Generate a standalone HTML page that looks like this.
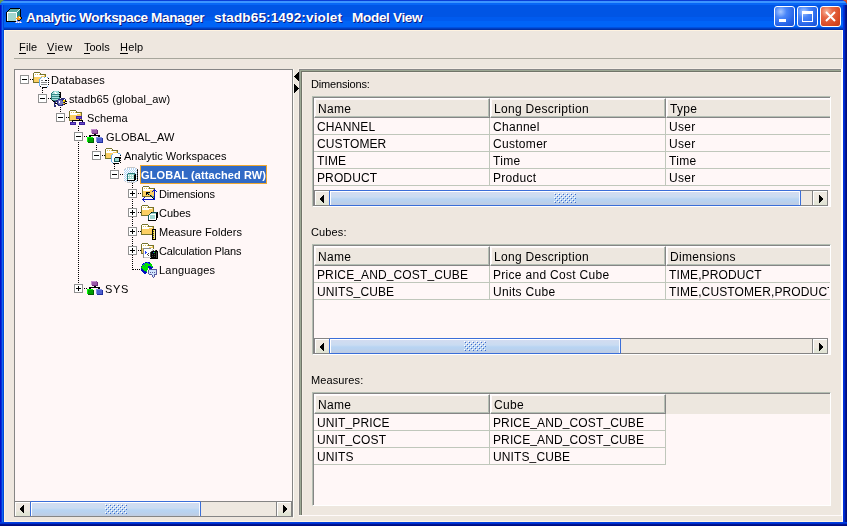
<!DOCTYPE html>
<html><head><meta charset="utf-8">
<style>
*{margin:0;padding:0;box-sizing:border-box}
html,body{width:847px;height:526px;overflow:hidden;background:linear-gradient(to right,#6a9a48 0,#6a9a48 423px,#d04a20 423px);font-family:"Liberation Sans",sans-serif}
.a{position:absolute}
#win{position:absolute;left:0;top:0;width:847px;height:526px;border-radius:6px 6px 0 0;overflow:hidden;background:#0842d8}
#title{position:absolute;left:0;top:0;width:847px;height:30px;
background:linear-gradient(to bottom,#0a3ed6 0px,#0a3ed6 1px,#3d95ff 1px,#3d95ff 3px,#0766f6 3px,#0766f6 5px,#0055e5 5px,#0055e5 17px,#005bef 17px,#005bef 21px,#0064f7 21px,#0064f7 27px,#0050e0 27px,#0050e0 28px,#0040c0 28px,#0040c0 29px,#0030a8 29px,#0030a8 30px)}
#lb{position:absolute;left:0;top:5px;width:4px;height:521px;background:linear-gradient(to right,#0010c8 0,#0010c8 1px,#0830d8 1px,#0830d8 2px,#1068f0 2px,#1068f0 3px,#0048d8 3px)}
#rb{position:absolute;left:843px;top:5px;width:4px;height:521px;background:linear-gradient(to right,#0030e0 0,#0030e0 1px,#0028c8 1px,#0028c8 2px,#001890 2px,#001890 3px,#000c80 3px)}
#bb{position:absolute;left:0;top:522px;width:847px;height:4px;background:linear-gradient(to bottom,#0040e0 0,#0040e0 1px,#0030d0 1px,#0030d0 2px,#001490 2px,#001490 3px,#000c80 3px)}
#client{position:absolute;left:4px;top:30px;width:839px;height:492px;background:#eee7df;border-top:1px solid #fff3e0;border-left:1px solid #fff3e0;border-bottom:1px solid #fff3e0;border-right:1px solid #fffff8}
.tt{position:absolute;top:9px;color:#fff;font-weight:bold;font-size:13.6px;line-height:17px;white-space:pre;text-shadow:1px 1px #0a1883}
.wbtn{position:absolute;top:6px;width:21px;height:21px;border:1px solid #fff;border-radius:3px;
background:radial-gradient(circle at 30% 25%,#a8c8ff 0,#4a86f8 30%,#2463e8 70%,#1a4fd0 100%)}
.wclose{background:radial-gradient(circle at 30% 25%,#f8b8a0 0,#e86a48 30%,#d84a24 70%,#c03a18 100%)}
.menu{position:absolute;top:41px;font-size:11px;line-height:13px;color:#000}
.menu u{text-decoration:none;border-bottom:1px solid #000}
.tree{position:absolute;left:14px;top:69px;width:279px;height:448px;border:1px solid #858585;background:#fff7f7}
.ti{position:absolute;font-size:11px;line-height:13px;color:#000;white-space:nowrap;letter-spacing:-0.15px}
.exp{position:absolute;width:9px;height:9px;border:1px solid #919191;background:#fff}
.exp:before{content:"";position:absolute;left:1px;top:3px;width:5px;height:1px;background:#000}
.exp.plus:after{content:"";position:absolute;left:3px;top:1px;width:1px;height:5px;background:#000}
.vd{position:absolute;width:1px;background:repeating-linear-gradient(to bottom,#000 0,#000 1px,transparent 1px,transparent 2px)}
.hd{position:absolute;height:1px;background:repeating-linear-gradient(to right,#000 0,#000 1px,transparent 1px,transparent 2px)}
.ico{position:absolute;width:16px;height:16px}
.lbl{position:absolute;font-size:11px;line-height:13px;color:#000;letter-spacing:-0.35px}
.pane{position:absolute;left:312px;width:519px;border-top:2px solid #898d86;border-left:2px solid #898d86;border-right:1px solid #fff;border-bottom:1px solid #fff;background:#fff8f8;overflow:hidden}
.hdr{position:absolute;left:0;top:0;height:20px;background:#ece9d8;border-top:0px solid #fff;box-shadow:inset 1px 2px #fff, inset -1px -2px #8b9087}
.cell{position:absolute;font-size:12px;line-height:15px;height:16px;color:#000;white-space:nowrap;overflow:hidden;letter-spacing:0px}
.grid{position:absolute;background:#c0c7bb}
.sb{position:absolute;height:16px;background:#efebe0}
.sbtn{position:absolute;top:0;width:15px;height:16px;background:linear-gradient(to bottom,#f4f1e8 0,#ebe7da 60%,#dcdccc 100%);border:1px solid #a0a098}
.thumb{position:absolute;top:0;height:16px;border:1px solid #3a6bd0;border-radius:1px;background:linear-gradient(to bottom,#d2def2 0,#c8dcf2 40%,#b8d4f0 55%,#bccbe0 100%)}
.grip{position:absolute;top:4px;width:22px;height:9px;background-image:radial-gradient(circle,#3a6bd0 0.7px,transparent 0.8px);background-size:4px 4px}
.ti,.cell,.lbl,.menu{filter:grayscale(1)}
#rightc,#win{}
</style></head><body>
<div id="win">
<div id="title">
  <svg class="a" style="left:6px;top:8px" width="17" height="16" viewBox="0 0 17 16" shape-rendering="crispEdges"><rect x="4" y="0" width="10" height="1" fill="#000000"/><rect x="3" y="1" width="1" height="1" fill="#000000"/><rect x="4" y="1" width="9" height="1" fill="#5aaaa2"/><rect x="13" y="1" width="1" height="1" fill="#e0f4f0"/><rect x="14" y="1" width="1" height="1" fill="#000000"/><rect x="2" y="2" width="1" height="1" fill="#000000"/><rect x="3" y="2" width="9" height="1" fill="#5aaaa2"/><rect x="12" y="2" width="1" height="1" fill="#e0f4f0"/><rect x="13" y="2" width="1" height="1" fill="#2a8a86"/><rect x="14" y="2" width="1" height="1" fill="#000000"/><rect x="1" y="3" width="1" height="1" fill="#000000"/><rect x="2" y="3" width="9" height="1" fill="#5aaaa2"/><rect x="11" y="3" width="1" height="1" fill="#e0f4f0"/><rect x="12" y="3" width="2" height="1" fill="#2a8a86"/><rect x="14" y="3" width="1" height="1" fill="#000000"/><rect x="0" y="4" width="1" height="1" fill="#000000"/><rect x="1" y="4" width="9" height="1" fill="#ffffff"/><rect x="10" y="4" width="1" height="1" fill="#e0f4f0"/><rect x="11" y="4" width="3" height="1" fill="#2a8a86"/><rect x="14" y="4" width="1" height="1" fill="#000000"/><rect x="0" y="5" width="1" height="1" fill="#000000"/><rect x="1" y="5" width="1" height="1" fill="#ffffff"/><rect x="2" y="5" width="8" height="1" fill="#a2d6ce"/><rect x="10" y="5" width="1" height="1" fill="#ffffff"/><rect x="11" y="5" width="3" height="1" fill="#2a8a86"/><rect x="14" y="5" width="1" height="1" fill="#000000"/><rect x="0" y="6" width="1" height="1" fill="#000000"/><rect x="1" y="6" width="1" height="1" fill="#ffffff"/><rect x="2" y="6" width="8" height="1" fill="#a2d6ce"/><rect x="10" y="6" width="1" height="1" fill="#ffffff"/><rect x="11" y="6" width="3" height="1" fill="#2a8a86"/><rect x="14" y="6" width="1" height="1" fill="#000000"/><rect x="0" y="7" width="1" height="1" fill="#000000"/><rect x="1" y="7" width="1" height="1" fill="#ffffff"/><rect x="2" y="7" width="8" height="1" fill="#a2d6ce"/><rect x="10" y="7" width="1" height="1" fill="#ffffff"/><rect x="11" y="7" width="3" height="1" fill="#2a8a86"/><rect x="14" y="7" width="1" height="1" fill="#000000"/><rect x="0" y="8" width="1" height="1" fill="#000000"/><rect x="1" y="8" width="1" height="1" fill="#ffffff"/><rect x="2" y="8" width="8" height="1" fill="#a2d6ce"/><rect x="10" y="8" width="1" height="1" fill="#ffffff"/><rect x="11" y="8" width="1" height="1" fill="#2a8a86"/><rect x="12" y="8" width="2" height="1" fill="#f0a020"/><rect x="14" y="8" width="1" height="1" fill="#000000"/><rect x="0" y="9" width="1" height="1" fill="#000000"/><rect x="1" y="9" width="1" height="1" fill="#ffffff"/><rect x="2" y="9" width="8" height="1" fill="#a2d6ce"/><rect x="10" y="9" width="1" height="1" fill="#ffffff"/><rect x="11" y="9" width="2" height="1" fill="#f0a020"/><rect x="13" y="9" width="1" height="1" fill="#ffffff"/><rect x="14" y="9" width="1" height="1" fill="#f0a020"/><rect x="15" y="9" width="1" height="1" fill="#000000"/><rect x="0" y="10" width="1" height="1" fill="#000000"/><rect x="1" y="10" width="1" height="1" fill="#ffffff"/><rect x="2" y="10" width="8" height="1" fill="#a2d6ce"/><rect x="10" y="10" width="5" height="1" fill="#f0a020"/><rect x="15" y="10" width="1" height="1" fill="#000000"/><rect x="0" y="11" width="1" height="1" fill="#000000"/><rect x="1" y="11" width="1" height="1" fill="#ffffff"/><rect x="2" y="11" width="8" height="1" fill="#a2d6ce"/><rect x="10" y="11" width="1" height="1" fill="#ffffff"/><rect x="11" y="11" width="1" height="1" fill="#c07010"/><rect x="12" y="11" width="2" height="1" fill="#f0a020"/><rect x="14" y="11" width="1" height="1" fill="#000000"/><rect x="0" y="12" width="1" height="1" fill="#000000"/><rect x="1" y="12" width="1" height="1" fill="#ffffff"/><rect x="2" y="12" width="8" height="1" fill="#a2d6ce"/><rect x="10" y="12" width="1" height="1" fill="#ffffff"/><rect x="12" y="12" width="2" height="1" fill="#000000"/><rect x="0" y="13" width="10" height="1" fill="#000000"/><rect x="10" y="13" width="5" height="1" fill="#a8a8e8"/><rect x="9" y="14" width="1" height="1" fill="#a8a8e8"/><rect x="10" y="14" width="1" height="1" fill="#ffffff"/><rect x="11" y="14" width="1" height="1" fill="#a8a8e8"/><rect x="12" y="14" width="1" height="1" fill="#ffffff"/><rect x="13" y="14" width="1" height="1" fill="#a8a8e8"/><rect x="14" y="14" width="1" height="1" fill="#ffffff"/><rect x="15" y="14" width="1" height="1" fill="#a8a8e8"/></svg>
  <div class="tt" style="left:26px;letter-spacing:-0.4px">Analytic Workspace Manager</div>
  <div class="tt" style="left:214px;letter-spacing:0.1px">stadb65:1492:violet</div>
  <div class="tt" style="left:352px;letter-spacing:-0.35px">Model View</div>
  <div class="wbtn" style="left:774px"><div class="a" style="left:4px;top:12px;width:7px;height:3px;background:#fff"></div></div>
  <div class="wbtn" style="left:797px"><div class="a" style="left:4px;top:4px;width:11px;height:11px;border:1px solid #fff;border-top-width:3px"></div></div>
  <div class="wbtn wclose" style="left:820px">
    <svg class="a" style="left:4px;top:4px" width="11" height="11" viewBox="0 0 11 11"><path d="M1 1 L10 10 M10 1 L1 10" stroke="#fff" stroke-width="2"/></svg>
  </div>
</div>
<div id="lb"></div><div id="rb"></div><div id="bb"></div>
<div id="client"></div>

<!-- menu -->
<div class="menu" style="left:19px;letter-spacing:0.17px"><u>F</u>ile</div>
<div class="menu" style="left:47px;letter-spacing:0.5px"><u>V</u>iew</div>
<div class="menu" style="left:84px"><u>T</u>ools</div>
<div class="menu" style="left:120px;letter-spacing:0.2px"><u>H</u>elp</div>
<div class="a" style="left:14px;top:58px;width:829px;height:1px;background:#a7a69c"></div>

<!-- tree pane -->
<div class="tree"></div>
<div class="hd" style="left:133px;top:269px;width:8px"></div>
<div class="vd" style="left:132px;top:183px;height:87px"></div>
<div class="vd" style="left:114px;top:164px;height:6px"></div>
<div class="vd" style="left:96px;top:145px;height:6px"></div>
<div class="vd" style="left:78px;top:126px;height:158px"></div>
<div class="vd" style="left:60px;top:107px;height:6px"></div>
<div class="vd" style="left:42px;top:88px;height:6px"></div>
<div class="exp" style="left:20px;top:75px"></div>
<div class="hd" style="left:30px;top:79px;width:3px"></div>
<svg class="ico" style="left:33px;top:72px;width:18px;height:18px" viewBox="0 0 18 18" shape-rendering="crispEdges"><rect x="1" y="0" width="6" height="1" fill="#77732c"/><rect x="0" y="1" width="1" height="1" fill="#77732c"/><rect x="1" y="1" width="6" height="1" fill="#ffffff"/><rect x="7" y="1" width="1" height="1" fill="#77732c"/><rect x="0" y="2" width="1" height="1" fill="#77732c"/><rect x="1" y="2" width="1" height="1" fill="#ffffff"/><rect x="2" y="2" width="1" height="1" fill="#e8c858"/><rect x="3" y="2" width="1" height="1" fill="#ffffff"/><rect x="4" y="2" width="1" height="1" fill="#e8c858"/><rect x="5" y="2" width="1" height="1" fill="#ffffff"/><rect x="6" y="2" width="1" height="1" fill="#e8c858"/><rect x="7" y="2" width="6" height="1" fill="#77732c"/><rect x="0" y="3" width="1" height="1" fill="#77732c"/><rect x="1" y="3" width="10" height="1" fill="#ffffff"/><rect x="11" y="3" width="1" height="1" fill="#fccf62"/><rect x="12" y="3" width="1" height="1" fill="#77732c"/><rect x="0" y="4" width="1" height="1" fill="#77732c"/><rect x="1" y="4" width="7" height="1" fill="#ffffff"/><rect x="8" y="4" width="4" height="1" fill="#fccf62"/><rect x="12" y="4" width="1" height="1" fill="#77732c"/><rect x="0" y="5" width="1" height="1" fill="#77732c"/><rect x="1" y="5" width="11" height="1" fill="#fccf62"/><rect x="12" y="5" width="1" height="1" fill="#77732c"/><rect x="0" y="6" width="1" height="1" fill="#77732c"/><rect x="1" y="6" width="11" height="1" fill="#fccf62"/><rect x="12" y="6" width="1" height="1" fill="#77732c"/><rect x="0" y="7" width="1" height="1" fill="#77732c"/><rect x="1" y="7" width="11" height="1" fill="#fccf62"/><rect x="12" y="7" width="1" height="1" fill="#77732c"/><rect x="0" y="8" width="1" height="1" fill="#77732c"/><rect x="1" y="8" width="11" height="1" fill="#fccf62"/><rect x="12" y="8" width="1" height="1" fill="#77732c"/><rect x="0" y="9" width="1" height="1" fill="#77732c"/><rect x="1" y="9" width="11" height="1" fill="#fccf62"/><rect x="12" y="9" width="1" height="1" fill="#77732c"/><rect x="0" y="10" width="13" height="1" fill="#77732c"/><rect x="8" y="5" width="1" height="1" fill="#6ab0f0"/><rect x="9" y="5" width="2" height="1" fill="#ffffff"/><rect x="11" y="5" width="1" height="1" fill="#6ab0f0"/><rect x="12" y="5" width="2" height="1" fill="#ffffff"/><rect x="14" y="5" width="1" height="1" fill="#6ab0f0"/><rect x="7" y="6" width="1" height="1" fill="#6ab0f0"/><rect x="8" y="6" width="7" height="1" fill="#ffffff"/><rect x="15" y="6" width="1" height="1" fill="#000000"/><rect x="6" y="7" width="1" height="1" fill="#6ab0f0"/><rect x="7" y="7" width="8" height="1" fill="#ffffff"/><rect x="6" y="8" width="1" height="1" fill="#6ab0f0"/><rect x="7" y="8" width="1" height="1" fill="#ffffff"/><rect x="8" y="8" width="2" height="1" fill="#8a8a8a"/><rect x="10" y="8" width="2" height="1" fill="#ffffff"/><rect x="12" y="8" width="2" height="1" fill="#000000"/><rect x="14" y="8" width="1" height="1" fill="#ffffff"/><rect x="15" y="8" width="1" height="1" fill="#000000"/><rect x="6" y="9" width="1" height="1" fill="#6ab0f0"/><rect x="7" y="9" width="8" height="1" fill="#ffffff"/><rect x="6" y="10" width="1" height="1" fill="#6ab0f0"/><rect x="7" y="10" width="1" height="1" fill="#ffffff"/><rect x="8" y="10" width="6" height="1" fill="#8a8a8a"/><rect x="14" y="10" width="1" height="1" fill="#ffffff"/><rect x="15" y="10" width="1" height="1" fill="#000000"/><rect x="6" y="11" width="1" height="1" fill="#6ab0f0"/><rect x="7" y="11" width="8" height="1" fill="#ffffff"/><rect x="6" y="12" width="1" height="1" fill="#6ab0f0"/><rect x="7" y="12" width="1" height="1" fill="#ffffff"/><rect x="8" y="12" width="6" height="1" fill="#8a8a8a"/><rect x="14" y="12" width="1" height="1" fill="#ffffff"/><rect x="15" y="12" width="1" height="1" fill="#000000"/><rect x="6" y="13" width="1" height="1" fill="#6ab0f0"/><rect x="7" y="13" width="8" height="1" fill="#ffffff"/><rect x="7" y="14" width="1" height="1" fill="#000000"/><rect x="8" y="14" width="6" height="1" fill="#ffffff"/><rect x="14" y="14" width="1" height="1" fill="#6ab0f0"/><rect x="9" y="15" width="5" height="1" fill="#000000"/></svg>
<div class="ti" style="left:51px;top:74px;letter-spacing:0.14px">Databases</div>
<div class="exp" style="left:38px;top:94px"></div>
<div class="hd" style="left:48px;top:98px;width:3px"></div>
<svg class="ico" style="left:51px;top:91px;width:18px;height:18px" viewBox="0 0 18 18" shape-rendering="crispEdges"><rect x="2" y="0" width="1" height="1" fill="#5aaaa8"/><rect x="3" y="0" width="4" height="1" fill="#a8e0dc"/><rect x="7" y="0" width="1" height="1" fill="#5aaaa8"/><rect x="1" y="1" width="1" height="1" fill="#2a7a78"/><rect x="2" y="1" width="1" height="1" fill="#a8e0dc"/><rect x="3" y="1" width="1" height="1" fill="#d8f4f0"/><rect x="4" y="1" width="1" height="1" fill="#ffffff"/><rect x="5" y="1" width="3" height="1" fill="#a8e0dc"/><rect x="8" y="1" width="2" height="1" fill="#000000"/><rect x="0" y="2" width="1" height="1" fill="#2a7a78"/><rect x="1" y="2" width="3" height="1" fill="#a8e0dc"/><rect x="4" y="2" width="2" height="1" fill="#ffffff"/><rect x="6" y="2" width="3" height="1" fill="#a8e0dc"/><rect x="9" y="2" width="1" height="1" fill="#000000"/><rect x="0" y="3" width="1" height="1" fill="#2a7a78"/><rect x="1" y="3" width="7" height="1" fill="#3a8a88"/><rect x="8" y="3" width="2" height="1" fill="#000000"/><rect x="0" y="4" width="1" height="1" fill="#2a7a78"/><rect x="1" y="4" width="7" height="1" fill="#a8e0dc"/><rect x="8" y="4" width="1" height="1" fill="#2a7a78"/><rect x="9" y="4" width="1" height="1" fill="#000000"/><rect x="0" y="5" width="1" height="1" fill="#2a7a78"/><rect x="1" y="5" width="7" height="1" fill="#3a8a88"/><rect x="8" y="5" width="2" height="1" fill="#000000"/><rect x="0" y="6" width="1" height="1" fill="#2a7a78"/><rect x="1" y="6" width="7" height="1" fill="#a8e0dc"/><rect x="8" y="6" width="1" height="1" fill="#2a7a78"/><rect x="9" y="6" width="1" height="1" fill="#000000"/><rect x="0" y="7" width="1" height="1" fill="#2a7a78"/><rect x="1" y="7" width="7" height="1" fill="#3a8a88"/><rect x="8" y="7" width="1" height="1" fill="#2a7a78"/><rect x="10" y="7" width="4" height="1" fill="#2c2c78"/><rect x="0" y="8" width="1" height="1" fill="#2a7a78"/><rect x="1" y="8" width="6" height="1" fill="#a8e0dc"/><rect x="7" y="8" width="6" height="1" fill="#2c2c78"/><rect x="13" y="8" width="1" height="1" fill="#ffffff"/><rect x="14" y="8" width="1" height="1" fill="#2c2c78"/><rect x="1" y="9" width="1" height="1" fill="#000000"/><rect x="2" y="9" width="1" height="1" fill="#2a7a78"/><rect x="3" y="9" width="2" height="1" fill="#3a8a88"/><rect x="5" y="9" width="2" height="1" fill="#2c2c78"/><rect x="7" y="9" width="4" height="1" fill="#7878c0"/><rect x="11" y="9" width="1" height="1" fill="#2c2c78"/><rect x="12" y="9" width="2" height="1" fill="#f8e800"/><rect x="14" y="9" width="1" height="1" fill="#000000"/><rect x="2" y="10" width="2" height="1" fill="#000000"/><rect x="4" y="10" width="3" height="1" fill="#2c2c78"/><rect x="7" y="10" width="1" height="1" fill="#7878c0"/><rect x="8" y="10" width="1" height="1" fill="#ffffff"/><rect x="9" y="10" width="3" height="1" fill="#7878c0"/><rect x="12" y="10" width="1" height="1" fill="#f8e800"/><rect x="13" y="10" width="1" height="1" fill="#f09020"/><rect x="14" y="10" width="2" height="1" fill="#000000"/><rect x="3" y="11" width="2" height="1" fill="#2c2c78"/><rect x="5" y="11" width="1" height="1" fill="#ffffff"/><rect x="6" y="11" width="1" height="1" fill="#2c2c78"/><rect x="7" y="11" width="1" height="1" fill="#7878c0"/><rect x="8" y="11" width="1" height="1" fill="#ffffff"/><rect x="9" y="11" width="3" height="1" fill="#7878c0"/><rect x="12" y="11" width="1" height="1" fill="#2c2c78"/><rect x="13" y="11" width="1" height="1" fill="#000000"/><rect x="3" y="12" width="1" height="1" fill="#2c2c78"/><rect x="4" y="12" width="2" height="1" fill="#000000"/><rect x="6" y="12" width="1" height="1" fill="#2c2c78"/><rect x="7" y="12" width="5" height="1" fill="#7878c0"/><rect x="12" y="12" width="1" height="1" fill="#f8e800"/><rect x="13" y="12" width="1" height="1" fill="#f09020"/><rect x="14" y="12" width="2" height="1" fill="#000000"/><rect x="3" y="13" width="1" height="1" fill="#2c2c78"/><rect x="6" y="13" width="2" height="1" fill="#2c2c78"/><rect x="8" y="13" width="3" height="1" fill="#7878c0"/><rect x="11" y="13" width="2" height="1" fill="#2c2c78"/><rect x="13" y="13" width="1" height="1" fill="#000000"/><rect x="3" y="14" width="2" height="1" fill="#2c2c78"/><rect x="7" y="14" width="5" height="1" fill="#2c2c78"/><rect x="3" y="15" width="2" height="1" fill="#2c2c78"/></svg>
<div class="ti" style="left:69px;top:93px;letter-spacing:0.12px">stadb65 (global_aw)</div>
<div class="exp" style="left:56px;top:113px"></div>
<div class="hd" style="left:66px;top:117px;width:3px"></div>
<svg class="ico" style="left:69px;top:110px;width:18px;height:18px" viewBox="0 0 18 18" shape-rendering="crispEdges"><rect x="1" y="0" width="6" height="1" fill="#77732c"/><rect x="0" y="1" width="1" height="1" fill="#77732c"/><rect x="1" y="1" width="6" height="1" fill="#ffffff"/><rect x="7" y="1" width="1" height="1" fill="#77732c"/><rect x="0" y="2" width="1" height="1" fill="#77732c"/><rect x="1" y="2" width="1" height="1" fill="#ffffff"/><rect x="2" y="2" width="1" height="1" fill="#e8c858"/><rect x="3" y="2" width="1" height="1" fill="#ffffff"/><rect x="4" y="2" width="1" height="1" fill="#e8c858"/><rect x="5" y="2" width="1" height="1" fill="#ffffff"/><rect x="6" y="2" width="1" height="1" fill="#e8c858"/><rect x="7" y="2" width="6" height="1" fill="#77732c"/><rect x="0" y="3" width="1" height="1" fill="#77732c"/><rect x="1" y="3" width="10" height="1" fill="#ffffff"/><rect x="11" y="3" width="1" height="1" fill="#fccf62"/><rect x="12" y="3" width="1" height="1" fill="#77732c"/><rect x="0" y="4" width="1" height="1" fill="#77732c"/><rect x="1" y="4" width="7" height="1" fill="#ffffff"/><rect x="8" y="4" width="4" height="1" fill="#fccf62"/><rect x="12" y="4" width="1" height="1" fill="#77732c"/><rect x="0" y="5" width="1" height="1" fill="#77732c"/><rect x="1" y="5" width="11" height="1" fill="#fccf62"/><rect x="12" y="5" width="1" height="1" fill="#77732c"/><rect x="0" y="6" width="1" height="1" fill="#77732c"/><rect x="1" y="6" width="11" height="1" fill="#fccf62"/><rect x="12" y="6" width="1" height="1" fill="#77732c"/><rect x="0" y="7" width="1" height="1" fill="#77732c"/><rect x="1" y="7" width="11" height="1" fill="#fccf62"/><rect x="12" y="7" width="1" height="1" fill="#77732c"/><rect x="0" y="8" width="1" height="1" fill="#77732c"/><rect x="1" y="8" width="11" height="1" fill="#fccf62"/><rect x="12" y="8" width="1" height="1" fill="#77732c"/><rect x="0" y="9" width="1" height="1" fill="#77732c"/><rect x="1" y="9" width="11" height="1" fill="#fccf62"/><rect x="12" y="9" width="1" height="1" fill="#77732c"/><rect x="0" y="10" width="13" height="1" fill="#77732c"/><rect x="7" y="6" width="6" height="1" fill="#4020a0"/><rect x="7" y="7" width="1" height="1" fill="#4020a0"/><rect x="8" y="7" width="4" height="1" fill="#6a50c8"/><rect x="12" y="7" width="1" height="1" fill="#4020a0"/><rect x="7" y="8" width="6" height="1" fill="#4020a0"/><rect x="10" y="9" width="1" height="1" fill="#000000"/><rect x="3" y="10" width="11" height="1" fill="#000000"/><rect x="3" y="11" width="1" height="1" fill="#000000"/><rect x="13" y="11" width="1" height="1" fill="#000000"/><rect x="1" y="12" width="6" height="1" fill="#4020a0"/><rect x="10" y="12" width="6" height="1" fill="#4020a0"/><rect x="1" y="13" width="1" height="1" fill="#4020a0"/><rect x="2" y="13" width="4" height="1" fill="#6a50c8"/><rect x="6" y="13" width="1" height="1" fill="#4020a0"/><rect x="10" y="13" width="1" height="1" fill="#4020a0"/><rect x="11" y="13" width="4" height="1" fill="#6a50c8"/><rect x="15" y="13" width="1" height="1" fill="#4020a0"/><rect x="1" y="14" width="6" height="1" fill="#4020a0"/><rect x="10" y="14" width="6" height="1" fill="#4020a0"/></svg>
<div class="ti" style="left:87px;top:112px;letter-spacing:0.06px">Schema</div>
<div class="exp" style="left:74px;top:132px"></div>
<div class="hd" style="left:84px;top:136px;width:3px"></div>
<svg class="ico" style="left:87px;top:129px;width:18px;height:18px" viewBox="0 0 18 18" shape-rendering="crispEdges"><rect x="4" y="0" width="5" height="1" fill="#c890d0"/><rect x="9" y="0" width="1" height="1" fill="#9a5aa8"/><rect x="4" y="1" width="1" height="1" fill="#c890d0"/><rect x="5" y="1" width="5" height="1" fill="#9a5aa8"/><rect x="10" y="1" width="1" height="1" fill="#6a2a78"/><rect x="4" y="2" width="1" height="1" fill="#c890d0"/><rect x="5" y="2" width="5" height="1" fill="#9a5aa8"/><rect x="10" y="2" width="1" height="1" fill="#6a2a78"/><rect x="4" y="3" width="1" height="1" fill="#c890d0"/><rect x="5" y="3" width="5" height="1" fill="#9a5aa8"/><rect x="10" y="3" width="1" height="1" fill="#6a2a78"/><rect x="5" y="4" width="6" height="1" fill="#6a2a78"/><rect x="7" y="5" width="2" height="1" fill="#000000"/><rect x="2" y="6" width="11" height="1" fill="#000000"/><rect x="2" y="7" width="2" height="1" fill="#000000"/><rect x="11" y="7" width="2" height="1" fill="#000000"/><rect x="0" y="8" width="6" height="1" fill="#00ff00"/><rect x="9" y="8" width="6" height="1" fill="#8090e8"/><rect x="0" y="9" width="1" height="1" fill="#00ff00"/><rect x="1" y="9" width="5" height="1" fill="#00a000"/><rect x="6" y="9" width="1" height="1" fill="#006000"/><rect x="9" y="9" width="1" height="1" fill="#8090e8"/><rect x="10" y="9" width="5" height="1" fill="#5060d0"/><rect x="15" y="9" width="1" height="1" fill="#2030a0"/><rect x="0" y="10" width="1" height="1" fill="#00ff00"/><rect x="1" y="10" width="5" height="1" fill="#00a000"/><rect x="6" y="10" width="1" height="1" fill="#006000"/><rect x="9" y="10" width="1" height="1" fill="#8090e8"/><rect x="10" y="10" width="5" height="1" fill="#5060d0"/><rect x="15" y="10" width="1" height="1" fill="#2030a0"/><rect x="0" y="11" width="1" height="1" fill="#00ff00"/><rect x="1" y="11" width="5" height="1" fill="#00a000"/><rect x="6" y="11" width="1" height="1" fill="#006000"/><rect x="9" y="11" width="1" height="1" fill="#8090e8"/><rect x="10" y="11" width="5" height="1" fill="#5060d0"/><rect x="15" y="11" width="1" height="1" fill="#2030a0"/><rect x="0" y="12" width="1" height="1" fill="#00ff00"/><rect x="1" y="12" width="5" height="1" fill="#00a000"/><rect x="6" y="12" width="1" height="1" fill="#006000"/><rect x="9" y="12" width="1" height="1" fill="#8090e8"/><rect x="10" y="12" width="5" height="1" fill="#5060d0"/><rect x="15" y="12" width="1" height="1" fill="#2030a0"/><rect x="1" y="13" width="6" height="1" fill="#006000"/><rect x="10" y="13" width="6" height="1" fill="#2030a0"/></svg>
<div class="ti" style="left:106px;top:131px;letter-spacing:0.11px">GLOBAL_AW</div>
<div class="exp" style="left:92px;top:151px"></div>
<div class="hd" style="left:102px;top:155px;width:3px"></div>
<svg class="ico" style="left:105px;top:148px;width:18px;height:18px" viewBox="0 0 18 18" shape-rendering="crispEdges"><rect x="1" y="0" width="6" height="1" fill="#77732c"/><rect x="0" y="1" width="1" height="1" fill="#77732c"/><rect x="1" y="1" width="6" height="1" fill="#ffffff"/><rect x="7" y="1" width="1" height="1" fill="#77732c"/><rect x="0" y="2" width="1" height="1" fill="#77732c"/><rect x="1" y="2" width="1" height="1" fill="#ffffff"/><rect x="2" y="2" width="1" height="1" fill="#e8c858"/><rect x="3" y="2" width="1" height="1" fill="#ffffff"/><rect x="4" y="2" width="1" height="1" fill="#e8c858"/><rect x="5" y="2" width="1" height="1" fill="#ffffff"/><rect x="6" y="2" width="1" height="1" fill="#e8c858"/><rect x="7" y="2" width="6" height="1" fill="#77732c"/><rect x="0" y="3" width="1" height="1" fill="#77732c"/><rect x="1" y="3" width="10" height="1" fill="#ffffff"/><rect x="11" y="3" width="1" height="1" fill="#fccf62"/><rect x="12" y="3" width="1" height="1" fill="#77732c"/><rect x="0" y="4" width="1" height="1" fill="#77732c"/><rect x="1" y="4" width="7" height="1" fill="#ffffff"/><rect x="8" y="4" width="4" height="1" fill="#fccf62"/><rect x="12" y="4" width="1" height="1" fill="#77732c"/><rect x="0" y="5" width="1" height="1" fill="#77732c"/><rect x="1" y="5" width="11" height="1" fill="#fccf62"/><rect x="12" y="5" width="1" height="1" fill="#77732c"/><rect x="0" y="6" width="1" height="1" fill="#77732c"/><rect x="1" y="6" width="11" height="1" fill="#fccf62"/><rect x="12" y="6" width="1" height="1" fill="#77732c"/><rect x="0" y="7" width="1" height="1" fill="#77732c"/><rect x="1" y="7" width="11" height="1" fill="#fccf62"/><rect x="12" y="7" width="1" height="1" fill="#77732c"/><rect x="0" y="8" width="1" height="1" fill="#77732c"/><rect x="1" y="8" width="11" height="1" fill="#fccf62"/><rect x="12" y="8" width="1" height="1" fill="#77732c"/><rect x="0" y="9" width="1" height="1" fill="#77732c"/><rect x="1" y="9" width="11" height="1" fill="#fccf62"/><rect x="12" y="9" width="1" height="1" fill="#77732c"/><rect x="0" y="10" width="13" height="1" fill="#77732c"/><rect x="8" y="5" width="5" height="1" fill="#ffffff"/><rect x="13" y="5" width="2" height="1" fill="#6ab0f0"/><rect x="7" y="6" width="1" height="1" fill="#6ab0f0"/><rect x="8" y="6" width="7" height="1" fill="#ffffff"/><rect x="15" y="6" width="1" height="1" fill="#6ab0f0"/><rect x="6" y="7" width="1" height="1" fill="#6ab0f0"/><rect x="7" y="7" width="8" height="1" fill="#ffffff"/><rect x="15" y="7" width="1" height="1" fill="#000000"/><rect x="6" y="8" width="1" height="1" fill="#6ab0f0"/><rect x="7" y="8" width="8" height="1" fill="#ffffff"/><rect x="6" y="9" width="1" height="1" fill="#6ab0f0"/><rect x="7" y="9" width="3" height="1" fill="#ffffff"/><rect x="10" y="9" width="6" height="1" fill="#000000"/><rect x="6" y="10" width="1" height="1" fill="#6ab0f0"/><rect x="7" y="10" width="2" height="1" fill="#ffffff"/><rect x="9" y="10" width="1" height="1" fill="#1a5a58"/><rect x="10" y="10" width="4" height="1" fill="#a0d8d0"/><rect x="14" y="10" width="2" height="1" fill="#000000"/><rect x="6" y="11" width="1" height="1" fill="#6ab0f0"/><rect x="7" y="11" width="2" height="1" fill="#ffffff"/><rect x="9" y="11" width="1" height="1" fill="#1a5a58"/><rect x="10" y="11" width="4" height="1" fill="#a0d8d0"/><rect x="14" y="11" width="1" height="1" fill="#000000"/><rect x="6" y="12" width="1" height="1" fill="#6ab0f0"/><rect x="7" y="12" width="2" height="1" fill="#ffffff"/><rect x="9" y="12" width="1" height="1" fill="#1a5a58"/><rect x="10" y="12" width="4" height="1" fill="#a0d8d0"/><rect x="14" y="12" width="2" height="1" fill="#000000"/><rect x="6" y="13" width="1" height="1" fill="#6ab0f0"/><rect x="7" y="13" width="2" height="1" fill="#ffffff"/><rect x="9" y="13" width="5" height="1" fill="#1a5a58"/><rect x="14" y="13" width="1" height="1" fill="#000000"/><rect x="7" y="14" width="1" height="1" fill="#6ab0f0"/><rect x="8" y="14" width="7" height="1" fill="#ffffff"/><rect x="15" y="14" width="1" height="1" fill="#000000"/><rect x="8" y="15" width="6" height="1" fill="#000000"/></svg>
<div class="ti" style="left:124px;top:150px;letter-spacing:0.03px">Analytic Workspaces</div>
<div class="exp" style="left:110px;top:170px"></div>
<div class="hd" style="left:120px;top:174px;width:3px"></div>
<svg class="ico" style="left:123px;top:167px;width:18px;height:18px" viewBox="0 0 18 18" shape-rendering="crispEdges"><rect x="4" y="0" width="8" height="1" fill="#c8c8c8"/><rect x="2" y="1" width="1" height="1" fill="#c8c8c8"/><rect x="3" y="1" width="1" height="1" fill="#ffffff"/><rect x="4" y="1" width="1" height="1" fill="#b4d4f4"/><rect x="5" y="1" width="1" height="1" fill="#ffffff"/><rect x="6" y="1" width="1" height="1" fill="#b4d4f4"/><rect x="7" y="1" width="1" height="1" fill="#ffffff"/><rect x="8" y="1" width="1" height="1" fill="#b4d4f4"/><rect x="9" y="1" width="1" height="1" fill="#ffffff"/><rect x="10" y="1" width="1" height="1" fill="#b4d4f4"/><rect x="11" y="1" width="1" height="1" fill="#ffffff"/><rect x="12" y="1" width="1" height="1" fill="#b4d4f4"/><rect x="13" y="1" width="1" height="1" fill="#c8c8c8"/><rect x="1" y="2" width="1" height="1" fill="#c8c8c8"/><rect x="2" y="2" width="1" height="1" fill="#b4d4f4"/><rect x="3" y="2" width="1" height="1" fill="#ffffff"/><rect x="4" y="2" width="1" height="1" fill="#b4d4f4"/><rect x="5" y="2" width="1" height="1" fill="#ffffff"/><rect x="6" y="2" width="1" height="1" fill="#b4d4f4"/><rect x="7" y="2" width="1" height="1" fill="#ffffff"/><rect x="8" y="2" width="1" height="1" fill="#b4d4f4"/><rect x="9" y="2" width="1" height="1" fill="#ffffff"/><rect x="10" y="2" width="1" height="1" fill="#b4d4f4"/><rect x="11" y="2" width="1" height="1" fill="#ffffff"/><rect x="12" y="2" width="1" height="1" fill="#b4d4f4"/><rect x="13" y="2" width="1" height="1" fill="#ffffff"/><rect x="14" y="2" width="1" height="1" fill="#404040"/><rect x="1" y="3" width="1" height="1" fill="#b4d4f4"/><rect x="2" y="3" width="1" height="1" fill="#ffffff"/><rect x="3" y="3" width="1" height="1" fill="#b4d4f4"/><rect x="4" y="3" width="1" height="1" fill="#ffffff"/><rect x="5" y="3" width="1" height="1" fill="#b4d4f4"/><rect x="6" y="3" width="1" height="1" fill="#ffffff"/><rect x="7" y="3" width="1" height="1" fill="#b4d4f4"/><rect x="8" y="3" width="1" height="1" fill="#ffffff"/><rect x="9" y="3" width="1" height="1" fill="#b4d4f4"/><rect x="10" y="3" width="1" height="1" fill="#ffffff"/><rect x="11" y="3" width="1" height="1" fill="#b4d4f4"/><rect x="12" y="3" width="1" height="1" fill="#ffffff"/><rect x="13" y="3" width="1" height="1" fill="#b4d4f4"/><rect x="14" y="3" width="1" height="1" fill="#000000"/><rect x="1" y="4" width="1" height="1" fill="#ffffff"/><rect x="2" y="4" width="1" height="1" fill="#b4d4f4"/><rect x="3" y="4" width="1" height="1" fill="#ffffff"/><rect x="4" y="4" width="1" height="1" fill="#b4d4f4"/><rect x="5" y="4" width="1" height="1" fill="#ffffff"/><rect x="6" y="4" width="1" height="1" fill="#b4d4f4"/><rect x="7" y="4" width="1" height="1" fill="#ffffff"/><rect x="8" y="4" width="1" height="1" fill="#b4d4f4"/><rect x="9" y="4" width="1" height="1" fill="#ffffff"/><rect x="10" y="4" width="1" height="1" fill="#b4d4f4"/><rect x="11" y="4" width="1" height="1" fill="#ffffff"/><rect x="12" y="4" width="1" height="1" fill="#b4d4f4"/><rect x="13" y="4" width="1" height="1" fill="#ffffff"/><rect x="14" y="4" width="1" height="1" fill="#404040"/><rect x="1" y="5" width="1" height="1" fill="#b4d4f4"/><rect x="2" y="5" width="1" height="1" fill="#ffffff"/><rect x="3" y="5" width="1" height="1" fill="#b4d4f4"/><rect x="4" y="5" width="1" height="1" fill="#ffffff"/><rect x="5" y="5" width="1" height="1" fill="#b4d4f4"/><rect x="6" y="5" width="1" height="1" fill="#ffffff"/><rect x="7" y="5" width="1" height="1" fill="#b4d4f4"/><rect x="8" y="5" width="1" height="1" fill="#ffffff"/><rect x="9" y="5" width="1" height="1" fill="#b4d4f4"/><rect x="10" y="5" width="1" height="1" fill="#ffffff"/><rect x="11" y="5" width="1" height="1" fill="#b4d4f4"/><rect x="12" y="5" width="1" height="1" fill="#ffffff"/><rect x="13" y="5" width="1" height="1" fill="#b4d4f4"/><rect x="14" y="5" width="1" height="1" fill="#000000"/><rect x="1" y="6" width="1" height="1" fill="#ffffff"/><rect x="2" y="6" width="1" height="1" fill="#b4d4f4"/><rect x="3" y="6" width="1" height="1" fill="#ffffff"/><rect x="4" y="6" width="1" height="1" fill="#b4d4f4"/><rect x="5" y="6" width="7" height="1" fill="#2a7a78"/><rect x="12" y="6" width="1" height="1" fill="#b4d4f4"/><rect x="13" y="6" width="1" height="1" fill="#ffffff"/><rect x="14" y="6" width="1" height="1" fill="#404040"/><rect x="1" y="7" width="1" height="1" fill="#b4d4f4"/><rect x="2" y="7" width="1" height="1" fill="#ffffff"/><rect x="3" y="7" width="1" height="1" fill="#b4d4f4"/><rect x="4" y="7" width="1" height="1" fill="#2a7a78"/><rect x="5" y="7" width="6" height="1" fill="#a0d8d0"/><rect x="11" y="7" width="1" height="1" fill="#2a7a78"/><rect x="12" y="7" width="1" height="1" fill="#000000"/><rect x="13" y="7" width="1" height="1" fill="#b4d4f4"/><rect x="14" y="7" width="1" height="1" fill="#000000"/><rect x="1" y="8" width="1" height="1" fill="#ffffff"/><rect x="2" y="8" width="1" height="1" fill="#b4d4f4"/><rect x="3" y="8" width="1" height="1" fill="#ffffff"/><rect x="4" y="8" width="1" height="1" fill="#2a7a78"/><rect x="5" y="8" width="1" height="1" fill="#ffffff"/><rect x="6" y="8" width="1" height="1" fill="#a0d8d0"/><rect x="7" y="8" width="1" height="1" fill="#ffffff"/><rect x="8" y="8" width="1" height="1" fill="#a0d8d0"/><rect x="9" y="8" width="1" height="1" fill="#ffffff"/><rect x="10" y="8" width="1" height="1" fill="#a0d8d0"/><rect x="11" y="8" width="2" height="1" fill="#000000"/><rect x="13" y="8" width="1" height="1" fill="#ffffff"/><rect x="14" y="8" width="1" height="1" fill="#404040"/><rect x="1" y="9" width="1" height="1" fill="#b4d4f4"/><rect x="2" y="9" width="1" height="1" fill="#ffffff"/><rect x="3" y="9" width="1" height="1" fill="#b4d4f4"/><rect x="4" y="9" width="1" height="1" fill="#2a7a78"/><rect x="5" y="9" width="6" height="1" fill="#a0d8d0"/><rect x="11" y="9" width="2" height="1" fill="#000000"/><rect x="13" y="9" width="1" height="1" fill="#b4d4f4"/><rect x="14" y="9" width="1" height="1" fill="#000000"/><rect x="1" y="10" width="1" height="1" fill="#ffffff"/><rect x="2" y="10" width="1" height="1" fill="#b4d4f4"/><rect x="3" y="10" width="1" height="1" fill="#ffffff"/><rect x="4" y="10" width="1" height="1" fill="#2a7a78"/><rect x="5" y="10" width="1" height="1" fill="#ffffff"/><rect x="6" y="10" width="1" height="1" fill="#a0d8d0"/><rect x="7" y="10" width="1" height="1" fill="#ffffff"/><rect x="8" y="10" width="1" height="1" fill="#a0d8d0"/><rect x="9" y="10" width="1" height="1" fill="#ffffff"/><rect x="10" y="10" width="1" height="1" fill="#a0d8d0"/><rect x="11" y="10" width="2" height="1" fill="#000000"/><rect x="13" y="10" width="1" height="1" fill="#ffffff"/><rect x="14" y="10" width="1" height="1" fill="#404040"/><rect x="1" y="11" width="1" height="1" fill="#b4d4f4"/><rect x="2" y="11" width="1" height="1" fill="#ffffff"/><rect x="3" y="11" width="1" height="1" fill="#b4d4f4"/><rect x="4" y="11" width="1" height="1" fill="#2a7a78"/><rect x="5" y="11" width="6" height="1" fill="#a0d8d0"/><rect x="11" y="11" width="2" height="1" fill="#000000"/><rect x="13" y="11" width="1" height="1" fill="#b4d4f4"/><rect x="14" y="11" width="1" height="1" fill="#000000"/><rect x="1" y="12" width="1" height="1" fill="#ffffff"/><rect x="2" y="12" width="1" height="1" fill="#b4d4f4"/><rect x="3" y="12" width="1" height="1" fill="#ffffff"/><rect x="4" y="12" width="1" height="1" fill="#2a7a78"/><rect x="5" y="12" width="6" height="1" fill="#ffffff"/><rect x="11" y="12" width="2" height="1" fill="#000000"/><rect x="13" y="12" width="1" height="1" fill="#ffffff"/><rect x="14" y="12" width="1" height="1" fill="#404040"/><rect x="1" y="13" width="1" height="1" fill="#b4d4f4"/><rect x="2" y="13" width="1" height="1" fill="#ffffff"/><rect x="3" y="13" width="1" height="1" fill="#b4d4f4"/><rect x="4" y="13" width="8" height="1" fill="#000000"/><rect x="12" y="13" width="1" height="1" fill="#ffffff"/><rect x="13" y="13" width="1" height="1" fill="#b4d4f4"/><rect x="14" y="13" width="1" height="1" fill="#000000"/><rect x="2" y="14" width="1" height="1" fill="#c8c8c8"/><rect x="3" y="14" width="1" height="1" fill="#ffffff"/><rect x="4" y="14" width="1" height="1" fill="#b4d4f4"/><rect x="5" y="14" width="1" height="1" fill="#ffffff"/><rect x="6" y="14" width="1" height="1" fill="#b4d4f4"/><rect x="7" y="14" width="1" height="1" fill="#ffffff"/><rect x="8" y="14" width="1" height="1" fill="#b4d4f4"/><rect x="9" y="14" width="1" height="1" fill="#ffffff"/><rect x="10" y="14" width="1" height="1" fill="#b4d4f4"/><rect x="11" y="14" width="1" height="1" fill="#ffffff"/><rect x="12" y="14" width="1" height="1" fill="#b4d4f4"/><rect x="13" y="14" width="1" height="1" fill="#c8c8c8"/><rect x="4" y="15" width="8" height="1" fill="#c8c8c8"/></svg>
<div class="a" style="left:140px;top:165px;width:127px;height:19px;background:#316ac5;border:1px solid #f0a830"></div>
<div class="ti" style="left:141px;top:169px;color:#fff;font-weight:bold;letter-spacing:0.1px">GLOBAL (attached RW)</div>
<div class="exp plus" style="left:128px;top:189px"></div>
<div class="hd" style="left:138px;top:193px;width:3px"></div>
<svg class="ico" style="left:141px;top:186px;width:18px;height:18px" viewBox="0 0 18 18" shape-rendering="crispEdges"><rect x="2" y="0" width="6" height="1" fill="#77732c"/><rect x="1" y="1" width="1" height="1" fill="#77732c"/><rect x="2" y="1" width="6" height="1" fill="#ffffff"/><rect x="8" y="1" width="1" height="1" fill="#77732c"/><rect x="1" y="2" width="1" height="1" fill="#77732c"/><rect x="2" y="2" width="1" height="1" fill="#ffffff"/><rect x="3" y="2" width="1" height="1" fill="#e8c858"/><rect x="4" y="2" width="1" height="1" fill="#ffffff"/><rect x="5" y="2" width="1" height="1" fill="#e8c858"/><rect x="6" y="2" width="1" height="1" fill="#ffffff"/><rect x="7" y="2" width="1" height="1" fill="#e8c858"/><rect x="8" y="2" width="6" height="1" fill="#77732c"/><rect x="1" y="3" width="1" height="1" fill="#77732c"/><rect x="2" y="3" width="10" height="1" fill="#ffffff"/><rect x="12" y="3" width="1" height="1" fill="#fccf62"/><rect x="13" y="3" width="1" height="1" fill="#77732c"/><rect x="1" y="4" width="1" height="1" fill="#77732c"/><rect x="2" y="4" width="7" height="1" fill="#ffffff"/><rect x="9" y="4" width="4" height="1" fill="#fccf62"/><rect x="13" y="4" width="1" height="1" fill="#77732c"/><rect x="1" y="5" width="1" height="1" fill="#77732c"/><rect x="2" y="5" width="11" height="1" fill="#fccf62"/><rect x="13" y="5" width="1" height="1" fill="#77732c"/><rect x="1" y="6" width="1" height="1" fill="#77732c"/><rect x="2" y="6" width="11" height="1" fill="#fccf62"/><rect x="13" y="6" width="1" height="1" fill="#77732c"/><rect x="1" y="7" width="1" height="1" fill="#77732c"/><rect x="2" y="7" width="11" height="1" fill="#fccf62"/><rect x="13" y="7" width="1" height="1" fill="#77732c"/><rect x="1" y="8" width="1" height="1" fill="#77732c"/><rect x="2" y="8" width="11" height="1" fill="#fccf62"/><rect x="13" y="8" width="1" height="1" fill="#77732c"/><rect x="1" y="9" width="1" height="1" fill="#77732c"/><rect x="2" y="9" width="11" height="1" fill="#fccf62"/><rect x="13" y="9" width="1" height="1" fill="#77732c"/><rect x="1" y="10" width="13" height="1" fill="#77732c"/><rect x="13" y="3" width="1" height="1" fill="#0010c0"/><rect x="12" y="4" width="3" height="1" fill="#0010c0"/><rect x="11" y="5" width="1" height="1" fill="#0010c0"/><rect x="13" y="5" width="1" height="1" fill="#0010c0"/><rect x="15" y="5" width="1" height="1" fill="#0010c0"/><rect x="5" y="6" width="4" height="1" fill="#000000"/><rect x="13" y="6" width="1" height="1" fill="#0010c0"/><rect x="5" y="7" width="2" height="1" fill="#000000"/><rect x="7" y="7" width="1" height="1" fill="#5aaaa8"/><rect x="13" y="7" width="1" height="1" fill="#0010c0"/><rect x="5" y="8" width="1" height="1" fill="#000000"/><rect x="7" y="8" width="1" height="1" fill="#000000"/><rect x="8" y="8" width="1" height="1" fill="#5aaaa8"/><rect x="13" y="8" width="1" height="1" fill="#0010c0"/><rect x="9" y="9" width="1" height="1" fill="#000000"/><rect x="10" y="9" width="1" height="1" fill="#5aaaa8"/><rect x="13" y="9" width="1" height="1" fill="#0010c0"/><rect x="10" y="10" width="1" height="1" fill="#000000"/><rect x="11" y="10" width="1" height="1" fill="#5aaaa8"/><rect x="13" y="10" width="1" height="1" fill="#0010c0"/><rect x="3" y="11" width="1" height="1" fill="#0010c0"/><rect x="11" y="11" width="1" height="1" fill="#000000"/><rect x="12" y="11" width="1" height="1" fill="#5aaaa8"/><rect x="13" y="11" width="1" height="1" fill="#0010c0"/><rect x="2" y="12" width="1" height="1" fill="#0010c0"/><rect x="12" y="12" width="1" height="1" fill="#000000"/><rect x="13" y="12" width="1" height="1" fill="#0010c0"/><rect x="1" y="13" width="13" height="1" fill="#0010c0"/><rect x="2" y="14" width="1" height="1" fill="#0010c0"/><rect x="3" y="15" width="1" height="1" fill="#0010c0"/></svg>
<div class="ti" style="left:159px;top:188px;letter-spacing:-0.16px">Dimensions</div>
<div class="exp plus" style="left:128px;top:208px"></div>
<div class="hd" style="left:138px;top:212px;width:3px"></div>
<svg class="ico" style="left:141px;top:205px;width:18px;height:18px" viewBox="0 0 18 18" shape-rendering="crispEdges"><rect x="1" y="0" width="6" height="1" fill="#77732c"/><rect x="0" y="1" width="1" height="1" fill="#77732c"/><rect x="1" y="1" width="6" height="1" fill="#ffffff"/><rect x="7" y="1" width="1" height="1" fill="#77732c"/><rect x="0" y="2" width="1" height="1" fill="#77732c"/><rect x="1" y="2" width="1" height="1" fill="#ffffff"/><rect x="2" y="2" width="1" height="1" fill="#e8c858"/><rect x="3" y="2" width="1" height="1" fill="#ffffff"/><rect x="4" y="2" width="1" height="1" fill="#e8c858"/><rect x="5" y="2" width="1" height="1" fill="#ffffff"/><rect x="6" y="2" width="1" height="1" fill="#e8c858"/><rect x="7" y="2" width="6" height="1" fill="#77732c"/><rect x="0" y="3" width="1" height="1" fill="#77732c"/><rect x="1" y="3" width="10" height="1" fill="#ffffff"/><rect x="11" y="3" width="1" height="1" fill="#fccf62"/><rect x="12" y="3" width="1" height="1" fill="#77732c"/><rect x="0" y="4" width="1" height="1" fill="#77732c"/><rect x="1" y="4" width="7" height="1" fill="#ffffff"/><rect x="8" y="4" width="4" height="1" fill="#fccf62"/><rect x="12" y="4" width="1" height="1" fill="#77732c"/><rect x="0" y="5" width="1" height="1" fill="#77732c"/><rect x="1" y="5" width="11" height="1" fill="#fccf62"/><rect x="12" y="5" width="1" height="1" fill="#77732c"/><rect x="0" y="6" width="1" height="1" fill="#77732c"/><rect x="1" y="6" width="11" height="1" fill="#fccf62"/><rect x="12" y="6" width="1" height="1" fill="#77732c"/><rect x="0" y="7" width="1" height="1" fill="#77732c"/><rect x="1" y="7" width="11" height="1" fill="#fccf62"/><rect x="12" y="7" width="1" height="1" fill="#77732c"/><rect x="0" y="8" width="1" height="1" fill="#77732c"/><rect x="1" y="8" width="11" height="1" fill="#fccf62"/><rect x="12" y="8" width="1" height="1" fill="#77732c"/><rect x="0" y="9" width="1" height="1" fill="#77732c"/><rect x="1" y="9" width="11" height="1" fill="#fccf62"/><rect x="12" y="9" width="1" height="1" fill="#77732c"/><rect x="0" y="10" width="13" height="1" fill="#77732c"/><rect x="10" y="7" width="1" height="1" fill="#000000"/><rect x="11" y="7" width="5" height="1" fill="#1a5a58"/><rect x="16" y="7" width="1" height="1" fill="#000000"/><rect x="9" y="8" width="1" height="1" fill="#1a5a58"/><rect x="10" y="8" width="5" height="1" fill="#a0d8d0"/><rect x="15" y="8" width="2" height="1" fill="#000000"/><rect x="8" y="9" width="1" height="1" fill="#1a5a58"/><rect x="9" y="9" width="6" height="1" fill="#ffffff"/><rect x="15" y="9" width="2" height="1" fill="#000000"/><rect x="7" y="10" width="1" height="1" fill="#1a5a58"/><rect x="8" y="10" width="1" height="1" fill="#ffffff"/><rect x="9" y="10" width="5" height="1" fill="#a0d8d0"/><rect x="14" y="10" width="1" height="1" fill="#ffffff"/><rect x="15" y="10" width="2" height="1" fill="#000000"/><rect x="7" y="11" width="1" height="1" fill="#1a5a58"/><rect x="8" y="11" width="1" height="1" fill="#ffffff"/><rect x="9" y="11" width="5" height="1" fill="#a0d8d0"/><rect x="14" y="11" width="1" height="1" fill="#ffffff"/><rect x="15" y="11" width="2" height="1" fill="#000000"/><rect x="7" y="12" width="1" height="1" fill="#1a5a58"/><rect x="8" y="12" width="1" height="1" fill="#ffffff"/><rect x="9" y="12" width="5" height="1" fill="#a0d8d0"/><rect x="14" y="12" width="1" height="1" fill="#ffffff"/><rect x="15" y="12" width="2" height="1" fill="#000000"/><rect x="7" y="13" width="1" height="1" fill="#1a5a58"/><rect x="8" y="13" width="1" height="1" fill="#ffffff"/><rect x="9" y="13" width="5" height="1" fill="#a0d8d0"/><rect x="14" y="13" width="1" height="1" fill="#ffffff"/><rect x="15" y="13" width="1" height="1" fill="#000000"/><rect x="7" y="14" width="1" height="1" fill="#1a5a58"/><rect x="8" y="14" width="7" height="1" fill="#ffffff"/><rect x="15" y="14" width="1" height="1" fill="#000000"/><rect x="7" y="15" width="8" height="1" fill="#000000"/></svg>
<div class="ti" style="left:159px;top:207px;letter-spacing:0px">Cubes</div>
<div class="exp plus" style="left:128px;top:227px"></div>
<div class="hd" style="left:138px;top:231px;width:3px"></div>
<svg class="ico" style="left:141px;top:224px;width:18px;height:18px" viewBox="0 0 18 18" shape-rendering="crispEdges"><rect x="1" y="0" width="6" height="1" fill="#77732c"/><rect x="0" y="1" width="1" height="1" fill="#77732c"/><rect x="1" y="1" width="6" height="1" fill="#ffffff"/><rect x="7" y="1" width="1" height="1" fill="#77732c"/><rect x="0" y="2" width="1" height="1" fill="#77732c"/><rect x="1" y="2" width="1" height="1" fill="#ffffff"/><rect x="2" y="2" width="1" height="1" fill="#e8c858"/><rect x="3" y="2" width="1" height="1" fill="#ffffff"/><rect x="4" y="2" width="1" height="1" fill="#e8c858"/><rect x="5" y="2" width="1" height="1" fill="#ffffff"/><rect x="6" y="2" width="1" height="1" fill="#e8c858"/><rect x="7" y="2" width="6" height="1" fill="#77732c"/><rect x="0" y="3" width="1" height="1" fill="#77732c"/><rect x="1" y="3" width="10" height="1" fill="#ffffff"/><rect x="11" y="3" width="1" height="1" fill="#fccf62"/><rect x="12" y="3" width="1" height="1" fill="#77732c"/><rect x="0" y="4" width="1" height="1" fill="#77732c"/><rect x="1" y="4" width="7" height="1" fill="#ffffff"/><rect x="8" y="4" width="4" height="1" fill="#fccf62"/><rect x="12" y="4" width="1" height="1" fill="#77732c"/><rect x="0" y="5" width="1" height="1" fill="#77732c"/><rect x="1" y="5" width="11" height="1" fill="#fccf62"/><rect x="12" y="5" width="1" height="1" fill="#77732c"/><rect x="0" y="6" width="1" height="1" fill="#77732c"/><rect x="1" y="6" width="11" height="1" fill="#fccf62"/><rect x="12" y="6" width="1" height="1" fill="#77732c"/><rect x="0" y="7" width="1" height="1" fill="#77732c"/><rect x="1" y="7" width="11" height="1" fill="#fccf62"/><rect x="12" y="7" width="1" height="1" fill="#77732c"/><rect x="0" y="8" width="1" height="1" fill="#77732c"/><rect x="1" y="8" width="11" height="1" fill="#fccf62"/><rect x="12" y="8" width="1" height="1" fill="#77732c"/><rect x="0" y="9" width="1" height="1" fill="#77732c"/><rect x="1" y="9" width="11" height="1" fill="#fccf62"/><rect x="12" y="9" width="1" height="1" fill="#77732c"/><rect x="0" y="10" width="13" height="1" fill="#77732c"/><rect x="11" y="5" width="4" height="1" fill="#000000"/><rect x="11" y="6" width="1" height="1" fill="#000000"/><rect x="12" y="6" width="1" height="1" fill="#f8e800"/><rect x="13" y="6" width="1" height="1" fill="#f8e4a0"/><rect x="14" y="6" width="1" height="1" fill="#000000"/><rect x="11" y="7" width="1" height="1" fill="#000000"/><rect x="12" y="7" width="1" height="1" fill="#404040"/><rect x="13" y="7" width="1" height="1" fill="#f8e4a0"/><rect x="14" y="7" width="1" height="1" fill="#000000"/><rect x="11" y="8" width="1" height="1" fill="#000000"/><rect x="12" y="8" width="1" height="1" fill="#f8e800"/><rect x="13" y="8" width="1" height="1" fill="#f8e4a0"/><rect x="14" y="8" width="1" height="1" fill="#000000"/><rect x="11" y="9" width="1" height="1" fill="#000000"/><rect x="12" y="9" width="1" height="1" fill="#404040"/><rect x="13" y="9" width="1" height="1" fill="#f8e4a0"/><rect x="14" y="9" width="1" height="1" fill="#000000"/><rect x="11" y="10" width="1" height="1" fill="#000000"/><rect x="12" y="10" width="1" height="1" fill="#f8e800"/><rect x="13" y="10" width="1" height="1" fill="#f8e4a0"/><rect x="14" y="10" width="1" height="1" fill="#000000"/><rect x="11" y="11" width="1" height="1" fill="#000000"/><rect x="12" y="11" width="1" height="1" fill="#404040"/><rect x="13" y="11" width="1" height="1" fill="#f8e4a0"/><rect x="14" y="11" width="1" height="1" fill="#000000"/><rect x="11" y="12" width="1" height="1" fill="#000000"/><rect x="12" y="12" width="1" height="1" fill="#f8e800"/><rect x="13" y="12" width="1" height="1" fill="#f8e4a0"/><rect x="14" y="12" width="1" height="1" fill="#000000"/><rect x="11" y="13" width="1" height="1" fill="#000000"/><rect x="12" y="13" width="1" height="1" fill="#404040"/><rect x="13" y="13" width="1" height="1" fill="#f8e4a0"/><rect x="14" y="13" width="1" height="1" fill="#000000"/><rect x="11" y="14" width="1" height="1" fill="#000000"/><rect x="12" y="14" width="1" height="1" fill="#f8e800"/><rect x="13" y="14" width="1" height="1" fill="#f8e4a0"/><rect x="14" y="14" width="1" height="1" fill="#000000"/><rect x="11" y="15" width="4" height="1" fill="#000000"/></svg>
<div class="ti" style="left:159px;top:226px;letter-spacing:0.03px">Measure Folders</div>
<div class="exp plus" style="left:128px;top:246px"></div>
<div class="hd" style="left:138px;top:250px;width:3px"></div>
<svg class="ico" style="left:141px;top:243px;width:18px;height:18px" viewBox="0 0 18 18" shape-rendering="crispEdges"><rect x="1" y="0" width="6" height="1" fill="#77732c"/><rect x="0" y="1" width="1" height="1" fill="#77732c"/><rect x="1" y="1" width="6" height="1" fill="#ffffff"/><rect x="7" y="1" width="1" height="1" fill="#77732c"/><rect x="0" y="2" width="1" height="1" fill="#77732c"/><rect x="1" y="2" width="1" height="1" fill="#ffffff"/><rect x="2" y="2" width="1" height="1" fill="#e8c858"/><rect x="3" y="2" width="1" height="1" fill="#ffffff"/><rect x="4" y="2" width="1" height="1" fill="#e8c858"/><rect x="5" y="2" width="1" height="1" fill="#ffffff"/><rect x="6" y="2" width="1" height="1" fill="#e8c858"/><rect x="7" y="2" width="6" height="1" fill="#77732c"/><rect x="0" y="3" width="1" height="1" fill="#77732c"/><rect x="1" y="3" width="10" height="1" fill="#ffffff"/><rect x="11" y="3" width="1" height="1" fill="#fccf62"/><rect x="12" y="3" width="1" height="1" fill="#77732c"/><rect x="0" y="4" width="1" height="1" fill="#77732c"/><rect x="1" y="4" width="7" height="1" fill="#ffffff"/><rect x="8" y="4" width="4" height="1" fill="#fccf62"/><rect x="12" y="4" width="1" height="1" fill="#77732c"/><rect x="0" y="5" width="1" height="1" fill="#77732c"/><rect x="1" y="5" width="11" height="1" fill="#fccf62"/><rect x="12" y="5" width="1" height="1" fill="#77732c"/><rect x="0" y="6" width="1" height="1" fill="#77732c"/><rect x="1" y="6" width="11" height="1" fill="#fccf62"/><rect x="12" y="6" width="1" height="1" fill="#77732c"/><rect x="0" y="7" width="1" height="1" fill="#77732c"/><rect x="1" y="7" width="11" height="1" fill="#fccf62"/><rect x="12" y="7" width="1" height="1" fill="#77732c"/><rect x="0" y="8" width="1" height="1" fill="#77732c"/><rect x="1" y="8" width="11" height="1" fill="#fccf62"/><rect x="12" y="8" width="1" height="1" fill="#77732c"/><rect x="0" y="9" width="1" height="1" fill="#77732c"/><rect x="1" y="9" width="11" height="1" fill="#fccf62"/><rect x="12" y="9" width="1" height="1" fill="#77732c"/><rect x="0" y="10" width="13" height="1" fill="#77732c"/><rect x="2" y="5" width="8" height="1" fill="#8a8a8a"/><rect x="10" y="5" width="2" height="1" fill="#ffffff"/><rect x="2" y="6" width="1" height="1" fill="#8a8a8a"/><rect x="3" y="6" width="8" height="1" fill="#ffffff"/><rect x="11" y="6" width="1" height="1" fill="#c8c8c8"/><rect x="12" y="6" width="1" height="1" fill="#ffffff"/><rect x="2" y="7" width="1" height="1" fill="#8a8a8a"/><rect x="3" y="7" width="8" height="1" fill="#ffffff"/><rect x="11" y="7" width="1" height="1" fill="#c8c8c8"/><rect x="12" y="7" width="1" height="1" fill="#404040"/><rect x="14" y="7" width="1" height="1" fill="#404040"/><rect x="15" y="7" width="1" height="1" fill="#000000"/><rect x="2" y="8" width="1" height="1" fill="#8a8a8a"/><rect x="3" y="8" width="1" height="1" fill="#ffffff"/><rect x="4" y="8" width="1" height="1" fill="#2040ff"/><rect x="5" y="8" width="5" height="1" fill="#ffffff"/><rect x="10" y="8" width="1" height="1" fill="#404040"/><rect x="11" y="8" width="6" height="1" fill="#000000"/><rect x="2" y="9" width="1" height="1" fill="#8a8a8a"/><rect x="3" y="9" width="1" height="1" fill="#ffffff"/><rect x="4" y="9" width="2" height="1" fill="#2040ff"/><rect x="6" y="9" width="3" height="1" fill="#ffffff"/><rect x="9" y="9" width="1" height="1" fill="#404040"/><rect x="10" y="9" width="2" height="1" fill="#000000"/><rect x="12" y="9" width="1" height="1" fill="#2040ff"/><rect x="13" y="9" width="1" height="1" fill="#00e000"/><rect x="14" y="9" width="1" height="1" fill="#000000"/><rect x="15" y="9" width="1" height="1" fill="#404040"/><rect x="16" y="9" width="1" height="1" fill="#000000"/><rect x="2" y="10" width="1" height="1" fill="#8a8a8a"/><rect x="3" y="10" width="1" height="1" fill="#ffffff"/><rect x="4" y="10" width="1" height="1" fill="#2040ff"/><rect x="5" y="10" width="2" height="1" fill="#ffffff"/><rect x="7" y="10" width="1" height="1" fill="#404040"/><rect x="8" y="10" width="1" height="1" fill="#ffffff"/><rect x="9" y="10" width="1" height="1" fill="#404040"/><rect x="10" y="10" width="5" height="1" fill="#000000"/><rect x="15" y="10" width="1" height="1" fill="#404040"/><rect x="16" y="10" width="1" height="1" fill="#000000"/><rect x="2" y="11" width="1" height="1" fill="#8a8a8a"/><rect x="3" y="11" width="3" height="1" fill="#ffffff"/><rect x="6" y="11" width="1" height="1" fill="#404040"/><rect x="7" y="11" width="2" height="1" fill="#ffffff"/><rect x="9" y="11" width="1" height="1" fill="#404040"/><rect x="10" y="11" width="1" height="1" fill="#000000"/><rect x="11" y="11" width="1" height="1" fill="#404040"/><rect x="12" y="11" width="1" height="1" fill="#000000"/><rect x="13" y="11" width="1" height="1" fill="#404040"/><rect x="14" y="11" width="1" height="1" fill="#000000"/><rect x="15" y="11" width="1" height="1" fill="#404040"/><rect x="16" y="11" width="1" height="1" fill="#000000"/><rect x="2" y="12" width="1" height="1" fill="#8a8a8a"/><rect x="3" y="12" width="4" height="1" fill="#ffffff"/><rect x="7" y="12" width="1" height="1" fill="#404040"/><rect x="8" y="12" width="1" height="1" fill="#ffffff"/><rect x="9" y="12" width="1" height="1" fill="#404040"/><rect x="10" y="12" width="5" height="1" fill="#000000"/><rect x="15" y="12" width="1" height="1" fill="#404040"/><rect x="16" y="12" width="1" height="1" fill="#000000"/><rect x="2" y="13" width="1" height="1" fill="#8a8a8a"/><rect x="3" y="13" width="6" height="1" fill="#ffffff"/><rect x="9" y="13" width="1" height="1" fill="#404040"/><rect x="10" y="13" width="1" height="1" fill="#000000"/><rect x="11" y="13" width="1" height="1" fill="#404040"/><rect x="12" y="13" width="1" height="1" fill="#000000"/><rect x="13" y="13" width="1" height="1" fill="#404040"/><rect x="14" y="13" width="1" height="1" fill="#000000"/><rect x="15" y="13" width="1" height="1" fill="#404040"/><rect x="16" y="13" width="1" height="1" fill="#000000"/><rect x="2" y="14" width="1" height="1" fill="#8a8a8a"/><rect x="3" y="14" width="7" height="1" fill="#c8c8c8"/><rect x="10" y="14" width="5" height="1" fill="#000000"/><rect x="15" y="14" width="1" height="1" fill="#404040"/><rect x="16" y="14" width="1" height="1" fill="#000000"/><rect x="9" y="15" width="8" height="1" fill="#000000"/></svg>
<div class="ti" style="left:159px;top:245px;letter-spacing:-0.16px">Calculation Plans</div>
<svg class="ico" style="left:141px;top:262px;width:18px;height:18px" viewBox="0 0 18 18" shape-rendering="crispEdges"><rect x="4" y="0" width="2" height="1" fill="#0010c0"/><rect x="6" y="0" width="1" height="1" fill="#2040ff"/><rect x="7" y="0" width="2" height="1" fill="#0010c0"/><rect x="2" y="1" width="1" height="1" fill="#0010c0"/><rect x="3" y="1" width="1" height="1" fill="#2040ff"/><rect x="4" y="1" width="3" height="1" fill="#00e000"/><rect x="7" y="1" width="1" height="1" fill="#2040ff"/><rect x="8" y="1" width="1" height="1" fill="#0010c0"/><rect x="9" y="1" width="1" height="1" fill="#00e000"/><rect x="1" y="2" width="1" height="1" fill="#0010c0"/><rect x="2" y="2" width="1" height="1" fill="#2040ff"/><rect x="3" y="2" width="8" height="1" fill="#00e000"/><rect x="1" y="3" width="2" height="1" fill="#00e000"/><rect x="3" y="3" width="1" height="1" fill="#2040ff"/><rect x="4" y="3" width="7" height="1" fill="#00e000"/><rect x="0" y="4" width="1" height="1" fill="#0010c0"/><rect x="1" y="4" width="6" height="1" fill="#00e000"/><rect x="7" y="4" width="3" height="1" fill="#0010c0"/><rect x="10" y="4" width="2" height="1" fill="#00e000"/><rect x="0" y="5" width="7" height="1" fill="#00e000"/><rect x="7" y="5" width="5" height="1" fill="#0010c0"/><rect x="0" y="6" width="1" height="1" fill="#0010c0"/><rect x="1" y="6" width="6" height="1" fill="#00e000"/><rect x="8" y="6" width="3" height="1" fill="#0010c0"/><rect x="0" y="7" width="2" height="1" fill="#0010c0"/><rect x="2" y="7" width="5" height="1" fill="#00e000"/><rect x="0" y="8" width="3" height="1" fill="#0010c0"/><rect x="3" y="8" width="3" height="1" fill="#00e000"/><rect x="1" y="9" width="4" height="1" fill="#0010c0"/><rect x="5" y="9" width="1" height="1" fill="#00e000"/><rect x="2" y="10" width="4" height="1" fill="#0010c0"/><rect x="3" y="11" width="2" height="1" fill="#0010c0"/><rect x="8" y="7" width="8" height="1" fill="#5a5aa0"/><rect x="7" y="8" width="1" height="1" fill="#5a5aa0"/><rect x="8" y="8" width="7" height="1" fill="#d0e4fc"/><rect x="15" y="8" width="1" height="1" fill="#5a5aa0"/><rect x="7" y="9" width="1" height="1" fill="#5a5aa0"/><rect x="8" y="9" width="7" height="1" fill="#d0e4fc"/><rect x="15" y="9" width="1" height="1" fill="#5a5aa0"/><rect x="7" y="10" width="1" height="1" fill="#5a5aa0"/><rect x="8" y="10" width="1" height="1" fill="#d0e4fc"/><rect x="9" y="10" width="1" height="1" fill="#5a5aa0"/><rect x="10" y="10" width="1" height="1" fill="#d0e4fc"/><rect x="11" y="10" width="1" height="1" fill="#5a5aa0"/><rect x="12" y="10" width="1" height="1" fill="#d0e4fc"/><rect x="13" y="10" width="1" height="1" fill="#5a5aa0"/><rect x="14" y="10" width="1" height="1" fill="#d0e4fc"/><rect x="15" y="10" width="1" height="1" fill="#5a5aa0"/><rect x="7" y="11" width="1" height="1" fill="#5a5aa0"/><rect x="8" y="11" width="7" height="1" fill="#d0e4fc"/><rect x="15" y="11" width="1" height="1" fill="#5a5aa0"/><rect x="8" y="12" width="3" height="1" fill="#5a5aa0"/><rect x="11" y="12" width="2" height="1" fill="#d0e4fc"/><rect x="13" y="12" width="3" height="1" fill="#5a5aa0"/><rect x="11" y="13" width="1" height="1" fill="#5a5aa0"/><rect x="12" y="13" width="1" height="1" fill="#d0e4fc"/><rect x="13" y="13" width="1" height="1" fill="#5a5aa0"/><rect x="11" y="14" width="1" height="1" fill="#5a5aa0"/><rect x="12" y="14" width="1" height="1" fill="#d0e4fc"/><rect x="13" y="14" width="1" height="1" fill="#5a5aa0"/><rect x="12" y="15" width="1" height="1" fill="#5a5aa0"/></svg>
<div class="ti" style="left:159px;top:264px;letter-spacing:0.2px">Languages</div>
<div class="exp plus" style="left:74px;top:284px"></div>
<div class="hd" style="left:84px;top:288px;width:3px"></div>
<svg class="ico" style="left:87px;top:281px;width:18px;height:18px" viewBox="0 0 18 18" shape-rendering="crispEdges"><rect x="4" y="0" width="5" height="1" fill="#c890d0"/><rect x="9" y="0" width="1" height="1" fill="#9a5aa8"/><rect x="4" y="1" width="1" height="1" fill="#c890d0"/><rect x="5" y="1" width="5" height="1" fill="#9a5aa8"/><rect x="10" y="1" width="1" height="1" fill="#6a2a78"/><rect x="4" y="2" width="1" height="1" fill="#c890d0"/><rect x="5" y="2" width="5" height="1" fill="#9a5aa8"/><rect x="10" y="2" width="1" height="1" fill="#6a2a78"/><rect x="4" y="3" width="1" height="1" fill="#c890d0"/><rect x="5" y="3" width="5" height="1" fill="#9a5aa8"/><rect x="10" y="3" width="1" height="1" fill="#6a2a78"/><rect x="5" y="4" width="6" height="1" fill="#6a2a78"/><rect x="7" y="5" width="2" height="1" fill="#000000"/><rect x="2" y="6" width="11" height="1" fill="#000000"/><rect x="2" y="7" width="2" height="1" fill="#000000"/><rect x="11" y="7" width="2" height="1" fill="#000000"/><rect x="0" y="8" width="6" height="1" fill="#00ff00"/><rect x="9" y="8" width="6" height="1" fill="#8090e8"/><rect x="0" y="9" width="1" height="1" fill="#00ff00"/><rect x="1" y="9" width="5" height="1" fill="#00a000"/><rect x="6" y="9" width="1" height="1" fill="#006000"/><rect x="9" y="9" width="1" height="1" fill="#8090e8"/><rect x="10" y="9" width="5" height="1" fill="#5060d0"/><rect x="15" y="9" width="1" height="1" fill="#2030a0"/><rect x="0" y="10" width="1" height="1" fill="#00ff00"/><rect x="1" y="10" width="5" height="1" fill="#00a000"/><rect x="6" y="10" width="1" height="1" fill="#006000"/><rect x="9" y="10" width="1" height="1" fill="#8090e8"/><rect x="10" y="10" width="5" height="1" fill="#5060d0"/><rect x="15" y="10" width="1" height="1" fill="#2030a0"/><rect x="0" y="11" width="1" height="1" fill="#00ff00"/><rect x="1" y="11" width="5" height="1" fill="#00a000"/><rect x="6" y="11" width="1" height="1" fill="#006000"/><rect x="9" y="11" width="1" height="1" fill="#8090e8"/><rect x="10" y="11" width="5" height="1" fill="#5060d0"/><rect x="15" y="11" width="1" height="1" fill="#2030a0"/><rect x="0" y="12" width="1" height="1" fill="#00ff00"/><rect x="1" y="12" width="5" height="1" fill="#00a000"/><rect x="6" y="12" width="1" height="1" fill="#006000"/><rect x="9" y="12" width="1" height="1" fill="#8090e8"/><rect x="10" y="12" width="5" height="1" fill="#5060d0"/><rect x="15" y="12" width="1" height="1" fill="#2030a0"/><rect x="1" y="13" width="6" height="1" fill="#006000"/><rect x="10" y="13" width="6" height="1" fill="#2030a0"/></svg>
<div class="ti" style="left:105px;top:283px;letter-spacing:0.7px">SYS</div>
<div class="a" style="left:15px;top:501px;width:277px;height:16px;background:#eee8e0;border-top:1px solid #848484;border-bottom:1px solid #848484"></div><div class="a" style="left:15px;top:502px;width:15px;height:14px;background:linear-gradient(to bottom,#eee8e0 0,#eee8e0 8px,#e4e6d8 9px,#dfe2d2 14px);border-top:1px solid #fff;border-left:1px solid #fff"></div><svg class="a" style="left:20px;top:505px" width="4" height="8" viewBox="0 0 4 8" shape-rendering="crispEdges"><path d="M3 0h1v8h-1zM2 1h1v6h-1zM1 2h1v4h-1zM0 3h1v2h-1z" fill="#000"/></svg><div class="a" style="left:276px;top:501px;width:16px;height:16px;border:1px solid #848484;background:linear-gradient(to bottom,#eee8e0 0,#eee8e0 9px,#e4e6d8 10px,#dfe2d2 15px)"><div class="a" style="left:0;top:0;width:14px;height:1px;background:#fff"></div><div class="a" style="left:0;top:0;width:1px;height:14px;background:#fff"></div></div><svg class="a" style="left:283px;top:505px" width="4" height="8" viewBox="0 0 4 8" shape-rendering="crispEdges"><path d="M0 0h1v8h-1zM1 1h1v6h-1zM2 2h1v4h-1zM3 3h1v2h-1z" fill="#000"/></svg><div class="a" style="left:30px;top:501px;width:171px;height:16px;border:1px solid #3a6ed8;border-radius:1px;box-shadow:inset 1px 0 #fff,inset -1px 0 #f4f8ff;background:linear-gradient(to bottom,#ffffff 0,#ffffff 1px,#d2dcf0 1px,#cadcf2 6px,#b8d4f2 8px,#b8d2f0 10px,#c0cce0 14px)"></div><svg class="a" style="left:105px;top:504px" width="23" height="11" viewBox="0 0 23 11" shape-rendering="crispEdges"><rect x="0" y="0" width="1" height="1" fill="#fff"/><rect x="1" y="1" width="1" height="1" fill="#3a6bd0"/><rect x="4" y="0" width="1" height="1" fill="#fff"/><rect x="5" y="1" width="1" height="1" fill="#3a6bd0"/><rect x="8" y="0" width="1" height="1" fill="#fff"/><rect x="9" y="1" width="1" height="1" fill="#3a6bd0"/><rect x="12" y="0" width="1" height="1" fill="#fff"/><rect x="13" y="1" width="1" height="1" fill="#3a6bd0"/><rect x="16" y="0" width="1" height="1" fill="#fff"/><rect x="17" y="1" width="1" height="1" fill="#3a6bd0"/><rect x="20" y="0" width="1" height="1" fill="#fff"/><rect x="21" y="1" width="1" height="1" fill="#3a6bd0"/><rect x="2" y="2" width="1" height="1" fill="#fff"/><rect x="3" y="3" width="1" height="1" fill="#3a6bd0"/><rect x="6" y="2" width="1" height="1" fill="#fff"/><rect x="7" y="3" width="1" height="1" fill="#3a6bd0"/><rect x="10" y="2" width="1" height="1" fill="#fff"/><rect x="11" y="3" width="1" height="1" fill="#3a6bd0"/><rect x="14" y="2" width="1" height="1" fill="#fff"/><rect x="15" y="3" width="1" height="1" fill="#3a6bd0"/><rect x="18" y="2" width="1" height="1" fill="#fff"/><rect x="19" y="3" width="1" height="1" fill="#3a6bd0"/><rect x="0" y="4" width="1" height="1" fill="#fff"/><rect x="1" y="5" width="1" height="1" fill="#3a6bd0"/><rect x="4" y="4" width="1" height="1" fill="#fff"/><rect x="5" y="5" width="1" height="1" fill="#3a6bd0"/><rect x="8" y="4" width="1" height="1" fill="#fff"/><rect x="9" y="5" width="1" height="1" fill="#3a6bd0"/><rect x="12" y="4" width="1" height="1" fill="#fff"/><rect x="13" y="5" width="1" height="1" fill="#3a6bd0"/><rect x="16" y="4" width="1" height="1" fill="#fff"/><rect x="17" y="5" width="1" height="1" fill="#3a6bd0"/><rect x="20" y="4" width="1" height="1" fill="#fff"/><rect x="21" y="5" width="1" height="1" fill="#3a6bd0"/><rect x="2" y="6" width="1" height="1" fill="#fff"/><rect x="3" y="7" width="1" height="1" fill="#3a6bd0"/><rect x="6" y="6" width="1" height="1" fill="#fff"/><rect x="7" y="7" width="1" height="1" fill="#3a6bd0"/><rect x="10" y="6" width="1" height="1" fill="#fff"/><rect x="11" y="7" width="1" height="1" fill="#3a6bd0"/><rect x="14" y="6" width="1" height="1" fill="#fff"/><rect x="15" y="7" width="1" height="1" fill="#3a6bd0"/><rect x="18" y="6" width="1" height="1" fill="#fff"/><rect x="19" y="7" width="1" height="1" fill="#3a6bd0"/><rect x="0" y="8" width="1" height="1" fill="#fff"/><rect x="1" y="9" width="1" height="1" fill="#3a6bd0"/><rect x="4" y="8" width="1" height="1" fill="#fff"/><rect x="5" y="9" width="1" height="1" fill="#3a6bd0"/><rect x="8" y="8" width="1" height="1" fill="#fff"/><rect x="9" y="9" width="1" height="1" fill="#3a6bd0"/><rect x="12" y="8" width="1" height="1" fill="#fff"/><rect x="13" y="9" width="1" height="1" fill="#3a6bd0"/><rect x="16" y="8" width="1" height="1" fill="#fff"/><rect x="17" y="9" width="1" height="1" fill="#3a6bd0"/><rect x="20" y="8" width="1" height="1" fill="#fff"/><rect x="21" y="9" width="1" height="1" fill="#3a6bd0"/></svg>
<div class="a" style="left:14px;top:516px;width:279px;height:1px;background:#858585"></div>



<!-- right panel -->
<div class="a" style="left:298px;top:68px;width:544px;height:1px;background:#f6eee6"></div>
<div class="a" style="left:298px;top:68px;width:1px;height:448px;background:#f6eee6"></div>
<div class="a" style="left:299px;top:69px;width:542px;height:1px;background:#888888"></div>
<div class="a" style="left:299px;top:69px;width:1px;height:446px;background:#888888"></div>
<div class="a" style="left:300px;top:70px;width:541px;height:1px;background:#9ca894"></div>
<div class="a" style="left:300px;top:70px;width:1px;height:445px;background:#9ca894"></div>
<div class="a" style="left:301px;top:71px;width:540px;height:1px;background:#707468"></div>
<div class="a" style="left:301px;top:71px;width:1px;height:444px;background:#707468"></div>
<div class="a" style="left:302px;top:72px;width:539px;height:1px;background:#f6eee6"></div>
<div class="a" style="left:302px;top:72px;width:1px;height:443px;background:#f6eee6"></div>
<div class="a" style="left:841px;top:69px;width:1px;height:447px;background:#ffffff"></div>
<div class="a" style="left:299px;top:515px;width:543px;height:1px;background:#fffafa"></div>
<div class="a" style="left:293px;top:69px;width:1px;height:449px;background:#fffcf8"></div>

<!-- splitter arrows -->
<svg class="a" style="left:294px;top:72px" width="5" height="21" viewBox="0 0 5 21" shape-rendering="crispEdges" fill="#000"><rect x="4" y="0" width="1" height="1"/><rect x="3" y="1" width="2" height="1"/><rect x="2" y="2" width="3" height="1"/><rect x="1" y="3" width="4" height="1"/><rect x="0" y="4" width="5" height="1"/><rect x="1" y="5" width="4" height="1"/><rect x="2" y="6" width="3" height="1"/><rect x="3" y="7" width="2" height="1"/><rect x="4" y="8" width="1" height="1"/><rect x="0" y="12" width="1" height="1"/><rect x="0" y="13" width="2" height="1"/><rect x="0" y="14" width="3" height="1"/><rect x="0" y="15" width="4" height="1"/><rect x="0" y="16" width="5" height="1"/><rect x="0" y="17" width="4" height="1"/><rect x="0" y="18" width="3" height="1"/><rect x="0" y="19" width="2" height="1"/><rect x="0" y="20" width="1" height="1"/></svg>
<div class="lbl" style="left:311px;top:78px;letter-spacing:-0.17px">Dimensions:</div>
<div class="a" style="left:312px;top:96px;width:519px;height:111px;background:#fff7f7;border-top:1px solid #b4beb2;border-left:1px solid #b4beb2;border-right:1px solid #fff;border-bottom:1px solid #fff"></div>
<div class="a" style="left:313px;top:97px;width:517px;height:1px;background:#858585"></div>
<div class="a" style="left:313px;top:97px;width:1px;height:109px;background:#858585"></div>
<div class="a" style="left:314px;top:98px;width:176px;height:20px;background:#ede7df;border-top:1px solid #fff;border-left:1px solid #fff;border-right:1px solid #858585;border-bottom:1px solid #858585;box-shadow:inset -1px -1px #b5bfb4, inset 1px 1px #fff8f8"></div>
<div class="cell" style="left:318px;top:102px;letter-spacing:0.3px">Name</div>
<div class="a" style="left:490px;top:98px;width:176px;height:20px;background:#ede7df;border-top:1px solid #fff;border-left:1px solid #fff;border-right:1px solid #858585;border-bottom:1px solid #858585;box-shadow:inset -1px -1px #b5bfb4, inset 1px 1px #fff8f8"></div>
<div class="cell" style="left:494px;top:102px;letter-spacing:0.3px">Long Description</div>
<div class="a" style="left:666px;top:98px;width:164px;height:20px;overflow:hidden"><div class="a" style="left:0;top:0;width:174px;height:20px;background:#ede7df;border-top:1px solid #fff;border-left:1px solid #fff;border-right:1px solid #858585;border-bottom:1px solid #858585;box-shadow:inset -1px -1px #b5bfb4, inset 1px 1px #fff8f8"></div></div>
<div class="cell" style="left:670px;top:102px;letter-spacing:0.3px">Type</div>
<div class="cell" style="left:317px;top:120px;width:172px;letter-spacing:0.12px">CHANNEL</div>
<div class="cell" style="left:493px;top:120px;width:172px;letter-spacing:0.3px">Channel</div>
<div class="cell" style="left:669px;top:120px;width:160px;letter-spacing:0.3px">User</div>
<div class="grid" style="left:314px;top:134px;width:516px;height:1px"></div>
<div class="cell" style="left:317px;top:137px;width:172px;letter-spacing:0.12px">CUSTOMER</div>
<div class="cell" style="left:493px;top:137px;width:172px;letter-spacing:0.3px">Customer</div>
<div class="cell" style="left:669px;top:137px;width:160px;letter-spacing:0.3px">User</div>
<div class="grid" style="left:314px;top:151px;width:516px;height:1px"></div>
<div class="cell" style="left:317px;top:154px;width:172px;letter-spacing:0.12px">TIME</div>
<div class="cell" style="left:493px;top:154px;width:172px;letter-spacing:0.3px">Time</div>
<div class="cell" style="left:669px;top:154px;width:160px;letter-spacing:0.3px">Time</div>
<div class="grid" style="left:314px;top:168px;width:516px;height:1px"></div>
<div class="cell" style="left:317px;top:171px;width:172px;letter-spacing:0.12px">PRODUCT</div>
<div class="cell" style="left:493px;top:171px;width:172px;letter-spacing:0.3px">Product</div>
<div class="cell" style="left:669px;top:171px;width:160px;letter-spacing:0.3px">User</div>
<div class="grid" style="left:314px;top:185px;width:516px;height:1px"></div>
<div class="grid" style="left:489px;top:118px;width:1px;height:68px"></div>
<div class="grid" style="left:665px;top:118px;width:1px;height:68px"></div>
<div class="a" style="left:314px;top:190px;width:514px;height:16px;background:#eee8e0;border-top:1px solid #848484;border-bottom:1px solid #848484"></div><div class="a" style="left:314px;top:190px;width:1px;height:16px;background:#848484"></div><div class="a" style="left:315px;top:191px;width:14px;height:14px;background:linear-gradient(to bottom,#eee8e0 0,#eee8e0 8px,#e4e6d8 9px,#dfe2d2 14px);border-top:1px solid #fff;border-left:1px solid #fff"></div><svg class="a" style="left:320px;top:195px" width="4" height="8" viewBox="0 0 4 8" shape-rendering="crispEdges"><path d="M3 0h1v8h-1zM2 1h1v6h-1zM1 2h1v4h-1zM0 3h1v2h-1z" fill="#000"/></svg><div class="a" style="left:812px;top:190px;width:16px;height:16px;border:1px solid #848484;background:linear-gradient(to bottom,#eee8e0 0,#eee8e0 9px,#e4e6d8 10px,#dfe2d2 15px)"><div class="a" style="left:0;top:0;width:14px;height:1px;background:#fff"></div><div class="a" style="left:0;top:0;width:1px;height:14px;background:#fff"></div></div><svg class="a" style="left:819px;top:195px" width="4" height="8" viewBox="0 0 4 8" shape-rendering="crispEdges"><path d="M0 0h1v8h-1zM1 1h1v6h-1zM2 2h1v4h-1zM3 3h1v2h-1z" fill="#000"/></svg><div class="a" style="left:329px;top:190px;width:472px;height:16px;border:1px solid #3a6ed8;border-radius:1px;box-shadow:inset 1px 0 #fff,inset -1px 0 #f4f8ff;background:linear-gradient(to bottom,#ffffff 0,#ffffff 1px,#d2dcf0 1px,#cadcf2 6px,#b8d4f2 8px,#b8d2f0 10px,#c0cce0 14px)"></div><svg class="a" style="left:554px;top:193px" width="23" height="11" viewBox="0 0 23 11" shape-rendering="crispEdges"><rect x="0" y="0" width="1" height="1" fill="#fff"/><rect x="1" y="1" width="1" height="1" fill="#3a6bd0"/><rect x="4" y="0" width="1" height="1" fill="#fff"/><rect x="5" y="1" width="1" height="1" fill="#3a6bd0"/><rect x="8" y="0" width="1" height="1" fill="#fff"/><rect x="9" y="1" width="1" height="1" fill="#3a6bd0"/><rect x="12" y="0" width="1" height="1" fill="#fff"/><rect x="13" y="1" width="1" height="1" fill="#3a6bd0"/><rect x="16" y="0" width="1" height="1" fill="#fff"/><rect x="17" y="1" width="1" height="1" fill="#3a6bd0"/><rect x="20" y="0" width="1" height="1" fill="#fff"/><rect x="21" y="1" width="1" height="1" fill="#3a6bd0"/><rect x="2" y="2" width="1" height="1" fill="#fff"/><rect x="3" y="3" width="1" height="1" fill="#3a6bd0"/><rect x="6" y="2" width="1" height="1" fill="#fff"/><rect x="7" y="3" width="1" height="1" fill="#3a6bd0"/><rect x="10" y="2" width="1" height="1" fill="#fff"/><rect x="11" y="3" width="1" height="1" fill="#3a6bd0"/><rect x="14" y="2" width="1" height="1" fill="#fff"/><rect x="15" y="3" width="1" height="1" fill="#3a6bd0"/><rect x="18" y="2" width="1" height="1" fill="#fff"/><rect x="19" y="3" width="1" height="1" fill="#3a6bd0"/><rect x="0" y="4" width="1" height="1" fill="#fff"/><rect x="1" y="5" width="1" height="1" fill="#3a6bd0"/><rect x="4" y="4" width="1" height="1" fill="#fff"/><rect x="5" y="5" width="1" height="1" fill="#3a6bd0"/><rect x="8" y="4" width="1" height="1" fill="#fff"/><rect x="9" y="5" width="1" height="1" fill="#3a6bd0"/><rect x="12" y="4" width="1" height="1" fill="#fff"/><rect x="13" y="5" width="1" height="1" fill="#3a6bd0"/><rect x="16" y="4" width="1" height="1" fill="#fff"/><rect x="17" y="5" width="1" height="1" fill="#3a6bd0"/><rect x="20" y="4" width="1" height="1" fill="#fff"/><rect x="21" y="5" width="1" height="1" fill="#3a6bd0"/><rect x="2" y="6" width="1" height="1" fill="#fff"/><rect x="3" y="7" width="1" height="1" fill="#3a6bd0"/><rect x="6" y="6" width="1" height="1" fill="#fff"/><rect x="7" y="7" width="1" height="1" fill="#3a6bd0"/><rect x="10" y="6" width="1" height="1" fill="#fff"/><rect x="11" y="7" width="1" height="1" fill="#3a6bd0"/><rect x="14" y="6" width="1" height="1" fill="#fff"/><rect x="15" y="7" width="1" height="1" fill="#3a6bd0"/><rect x="18" y="6" width="1" height="1" fill="#fff"/><rect x="19" y="7" width="1" height="1" fill="#3a6bd0"/><rect x="0" y="8" width="1" height="1" fill="#fff"/><rect x="1" y="9" width="1" height="1" fill="#3a6bd0"/><rect x="4" y="8" width="1" height="1" fill="#fff"/><rect x="5" y="9" width="1" height="1" fill="#3a6bd0"/><rect x="8" y="8" width="1" height="1" fill="#fff"/><rect x="9" y="9" width="1" height="1" fill="#3a6bd0"/><rect x="12" y="8" width="1" height="1" fill="#fff"/><rect x="13" y="9" width="1" height="1" fill="#3a6bd0"/><rect x="16" y="8" width="1" height="1" fill="#fff"/><rect x="17" y="9" width="1" height="1" fill="#3a6bd0"/><rect x="20" y="8" width="1" height="1" fill="#fff"/><rect x="21" y="9" width="1" height="1" fill="#3a6bd0"/></svg>
<div class="lbl" style="left:311px;top:226px;letter-spacing:0.14px">Cubes:</div>
<div class="a" style="left:312px;top:244px;width:519px;height:111px;background:#fff7f7;border-top:1px solid #b4beb2;border-left:1px solid #b4beb2;border-right:1px solid #fff;border-bottom:1px solid #fff"></div>
<div class="a" style="left:313px;top:245px;width:517px;height:1px;background:#858585"></div>
<div class="a" style="left:313px;top:245px;width:1px;height:109px;background:#858585"></div>
<div class="a" style="left:314px;top:246px;width:176px;height:20px;background:#ede7df;border-top:1px solid #fff;border-left:1px solid #fff;border-right:1px solid #858585;border-bottom:1px solid #858585;box-shadow:inset -1px -1px #b5bfb4, inset 1px 1px #fff8f8"></div>
<div class="cell" style="left:318px;top:250px;letter-spacing:0.3px">Name</div>
<div class="a" style="left:490px;top:246px;width:176px;height:20px;background:#ede7df;border-top:1px solid #fff;border-left:1px solid #fff;border-right:1px solid #858585;border-bottom:1px solid #858585;box-shadow:inset -1px -1px #b5bfb4, inset 1px 1px #fff8f8"></div>
<div class="cell" style="left:494px;top:250px;letter-spacing:0.3px">Long Description</div>
<div class="a" style="left:666px;top:246px;width:164px;height:20px;overflow:hidden"><div class="a" style="left:0;top:0;width:174px;height:20px;background:#ede7df;border-top:1px solid #fff;border-left:1px solid #fff;border-right:1px solid #858585;border-bottom:1px solid #858585;box-shadow:inset -1px -1px #b5bfb4, inset 1px 1px #fff8f8"></div></div>
<div class="cell" style="left:670px;top:250px;letter-spacing:0.3px">Dimensions</div>
<div class="cell" style="left:317px;top:268px;width:172px;letter-spacing:0.12px">PRICE<span style="position:relative;top:-1px">_</span>AND<span style="position:relative;top:-1px">_</span>COST<span style="position:relative;top:-1px">_</span>CUBE</div>
<div class="cell" style="left:493px;top:268px;width:172px;letter-spacing:0.3px">Price and Cost Cube</div>
<div class="cell" style="left:669px;top:268px;width:160px;letter-spacing:0.12px">TIME,PRODUCT</div>
<div class="grid" style="left:314px;top:282px;width:516px;height:1px"></div>
<div class="cell" style="left:317px;top:285px;width:172px;letter-spacing:0.12px">UNITS<span style="position:relative;top:-1px">_</span>CUBE</div>
<div class="cell" style="left:493px;top:285px;width:172px;letter-spacing:0.3px">Units Cube</div>
<div class="cell" style="left:669px;top:285px;width:160px;letter-spacing:0.12px">TIME,CUSTOMER,PRODUCT</div>
<div class="grid" style="left:314px;top:299px;width:516px;height:1px"></div>
<div class="grid" style="left:489px;top:266px;width:1px;height:34px"></div>
<div class="grid" style="left:665px;top:266px;width:1px;height:34px"></div>
<div class="a" style="left:314px;top:338px;width:514px;height:16px;background:#eee8e0;border-top:1px solid #848484;border-bottom:1px solid #848484"></div><div class="a" style="left:314px;top:338px;width:1px;height:16px;background:#848484"></div><div class="a" style="left:315px;top:339px;width:14px;height:14px;background:linear-gradient(to bottom,#eee8e0 0,#eee8e0 8px,#e4e6d8 9px,#dfe2d2 14px);border-top:1px solid #fff;border-left:1px solid #fff"></div><svg class="a" style="left:320px;top:343px" width="4" height="8" viewBox="0 0 4 8" shape-rendering="crispEdges"><path d="M3 0h1v8h-1zM2 1h1v6h-1zM1 2h1v4h-1zM0 3h1v2h-1z" fill="#000"/></svg><div class="a" style="left:812px;top:338px;width:16px;height:16px;border:1px solid #848484;background:linear-gradient(to bottom,#eee8e0 0,#eee8e0 9px,#e4e6d8 10px,#dfe2d2 15px)"><div class="a" style="left:0;top:0;width:14px;height:1px;background:#fff"></div><div class="a" style="left:0;top:0;width:1px;height:14px;background:#fff"></div></div><svg class="a" style="left:819px;top:343px" width="4" height="8" viewBox="0 0 4 8" shape-rendering="crispEdges"><path d="M0 0h1v8h-1zM1 1h1v6h-1zM2 2h1v4h-1zM3 3h1v2h-1z" fill="#000"/></svg><div class="a" style="left:329px;top:338px;width:292px;height:16px;border:1px solid #3a6ed8;border-radius:1px;box-shadow:inset 1px 0 #fff,inset -1px 0 #f4f8ff;background:linear-gradient(to bottom,#ffffff 0,#ffffff 1px,#d2dcf0 1px,#cadcf2 6px,#b8d4f2 8px,#b8d2f0 10px,#c0cce0 14px)"></div><svg class="a" style="left:464px;top:341px" width="23" height="11" viewBox="0 0 23 11" shape-rendering="crispEdges"><rect x="0" y="0" width="1" height="1" fill="#fff"/><rect x="1" y="1" width="1" height="1" fill="#3a6bd0"/><rect x="4" y="0" width="1" height="1" fill="#fff"/><rect x="5" y="1" width="1" height="1" fill="#3a6bd0"/><rect x="8" y="0" width="1" height="1" fill="#fff"/><rect x="9" y="1" width="1" height="1" fill="#3a6bd0"/><rect x="12" y="0" width="1" height="1" fill="#fff"/><rect x="13" y="1" width="1" height="1" fill="#3a6bd0"/><rect x="16" y="0" width="1" height="1" fill="#fff"/><rect x="17" y="1" width="1" height="1" fill="#3a6bd0"/><rect x="20" y="0" width="1" height="1" fill="#fff"/><rect x="21" y="1" width="1" height="1" fill="#3a6bd0"/><rect x="2" y="2" width="1" height="1" fill="#fff"/><rect x="3" y="3" width="1" height="1" fill="#3a6bd0"/><rect x="6" y="2" width="1" height="1" fill="#fff"/><rect x="7" y="3" width="1" height="1" fill="#3a6bd0"/><rect x="10" y="2" width="1" height="1" fill="#fff"/><rect x="11" y="3" width="1" height="1" fill="#3a6bd0"/><rect x="14" y="2" width="1" height="1" fill="#fff"/><rect x="15" y="3" width="1" height="1" fill="#3a6bd0"/><rect x="18" y="2" width="1" height="1" fill="#fff"/><rect x="19" y="3" width="1" height="1" fill="#3a6bd0"/><rect x="0" y="4" width="1" height="1" fill="#fff"/><rect x="1" y="5" width="1" height="1" fill="#3a6bd0"/><rect x="4" y="4" width="1" height="1" fill="#fff"/><rect x="5" y="5" width="1" height="1" fill="#3a6bd0"/><rect x="8" y="4" width="1" height="1" fill="#fff"/><rect x="9" y="5" width="1" height="1" fill="#3a6bd0"/><rect x="12" y="4" width="1" height="1" fill="#fff"/><rect x="13" y="5" width="1" height="1" fill="#3a6bd0"/><rect x="16" y="4" width="1" height="1" fill="#fff"/><rect x="17" y="5" width="1" height="1" fill="#3a6bd0"/><rect x="20" y="4" width="1" height="1" fill="#fff"/><rect x="21" y="5" width="1" height="1" fill="#3a6bd0"/><rect x="2" y="6" width="1" height="1" fill="#fff"/><rect x="3" y="7" width="1" height="1" fill="#3a6bd0"/><rect x="6" y="6" width="1" height="1" fill="#fff"/><rect x="7" y="7" width="1" height="1" fill="#3a6bd0"/><rect x="10" y="6" width="1" height="1" fill="#fff"/><rect x="11" y="7" width="1" height="1" fill="#3a6bd0"/><rect x="14" y="6" width="1" height="1" fill="#fff"/><rect x="15" y="7" width="1" height="1" fill="#3a6bd0"/><rect x="18" y="6" width="1" height="1" fill="#fff"/><rect x="19" y="7" width="1" height="1" fill="#3a6bd0"/><rect x="0" y="8" width="1" height="1" fill="#fff"/><rect x="1" y="9" width="1" height="1" fill="#3a6bd0"/><rect x="4" y="8" width="1" height="1" fill="#fff"/><rect x="5" y="9" width="1" height="1" fill="#3a6bd0"/><rect x="8" y="8" width="1" height="1" fill="#fff"/><rect x="9" y="9" width="1" height="1" fill="#3a6bd0"/><rect x="12" y="8" width="1" height="1" fill="#fff"/><rect x="13" y="9" width="1" height="1" fill="#3a6bd0"/><rect x="16" y="8" width="1" height="1" fill="#fff"/><rect x="17" y="9" width="1" height="1" fill="#3a6bd0"/><rect x="20" y="8" width="1" height="1" fill="#fff"/><rect x="21" y="9" width="1" height="1" fill="#3a6bd0"/></svg>
<div class="lbl" style="left:311px;top:374px;letter-spacing:0.11px">Measures:</div>
<div class="a" style="left:312px;top:392px;width:519px;height:114px;background:#fff7f7;border-top:1px solid #b4beb2;border-left:1px solid #b4beb2;border-right:1px solid #fff;border-bottom:1px solid #fff"></div>
<div class="a" style="left:313px;top:393px;width:517px;height:1px;background:#858585"></div>
<div class="a" style="left:313px;top:393px;width:1px;height:112px;background:#858585"></div>
<div class="a" style="left:314px;top:394px;width:176px;height:20px;background:#ede7df;border-top:1px solid #fff;border-left:1px solid #fff;border-right:1px solid #858585;border-bottom:1px solid #858585;box-shadow:inset -1px -1px #b5bfb4, inset 1px 1px #fff8f8"></div>
<div class="cell" style="left:318px;top:398px;letter-spacing:0.3px">Name</div>
<div class="a" style="left:490px;top:394px;width:176px;height:20px;background:#ede7df;border-top:1px solid #fff;border-left:1px solid #fff;border-right:1px solid #858585;border-bottom:1px solid #858585;box-shadow:inset -1px -1px #b5bfb4, inset 1px 1px #fff8f8"></div>
<div class="cell" style="left:494px;top:398px;letter-spacing:0.3px">Cube</div>
<div class="a" style="left:666px;top:394px;width:164px;height:20px;background:#ede7df"></div>
<div class="cell" style="left:317px;top:416px;width:172px;letter-spacing:0.12px">UNIT<span style="position:relative;top:-1px">_</span>PRICE</div>
<div class="cell" style="left:493px;top:416px;width:172px;letter-spacing:0.12px">PRICE<span style="position:relative;top:-1px">_</span>AND<span style="position:relative;top:-1px">_</span>COST<span style="position:relative;top:-1px">_</span>CUBE</div>
<div class="grid" style="left:314px;top:430px;width:352px;height:1px"></div>
<div class="cell" style="left:317px;top:433px;width:172px;letter-spacing:0.12px">UNIT<span style="position:relative;top:-1px">_</span>COST</div>
<div class="cell" style="left:493px;top:433px;width:172px;letter-spacing:0.12px">PRICE<span style="position:relative;top:-1px">_</span>AND<span style="position:relative;top:-1px">_</span>COST<span style="position:relative;top:-1px">_</span>CUBE</div>
<div class="grid" style="left:314px;top:447px;width:352px;height:1px"></div>
<div class="cell" style="left:317px;top:450px;width:172px;letter-spacing:0.12px">UNITS</div>
<div class="cell" style="left:493px;top:450px;width:172px;letter-spacing:0.12px">UNITS<span style="position:relative;top:-1px">_</span>CUBE</div>
<div class="grid" style="left:314px;top:464px;width:352px;height:1px"></div>
<div class="grid" style="left:489px;top:414px;width:1px;height:51px"></div>
<div class="grid" style="left:665px;top:414px;width:1px;height:51px"></div>
</div>
</body></html>
